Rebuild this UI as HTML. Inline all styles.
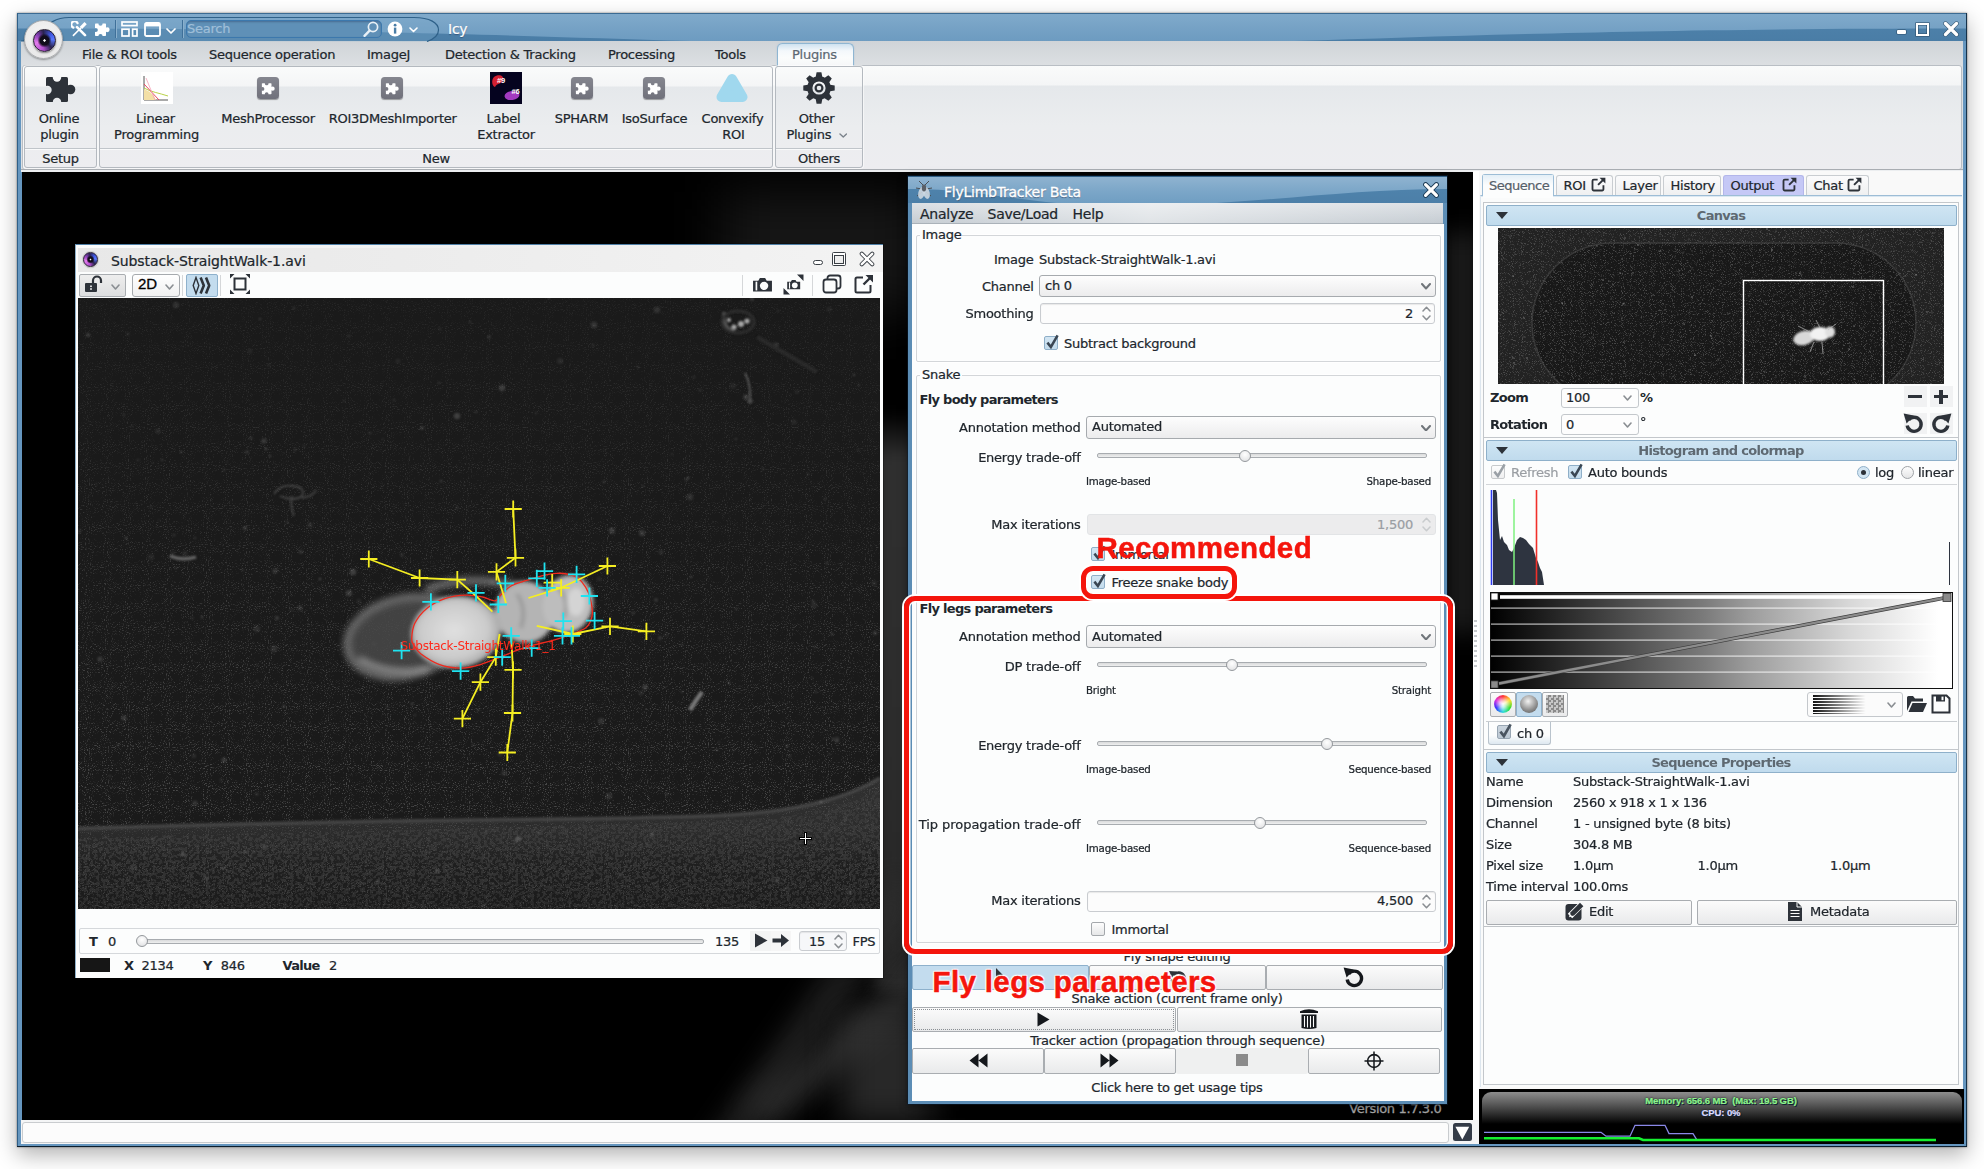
<!DOCTYPE html>
<html><head><meta charset="utf-8"><title>Icy</title>
<style>
*{box-sizing:border-box;margin:0;padding:0}
html,body{width:1984px;height:1169px;overflow:hidden;background:#fff}
body{font-family:"DejaVu Sans","Liberation Sans",sans-serif;font-size:13px;letter-spacing:-0.25px;color:#20262c;position:relative;-webkit-text-stroke:.22px}
body div,body svg,body span.a{position:absolute}
.t{white-space:nowrap;line-height:16px;height:16px}
.b{font-weight:bold;letter-spacing:-0.7px;-webkit-text-stroke:0}
.w{color:#fff}
.g{color:#9a9ea3}
.s{letter-spacing:-0.2px}
#win{left:17px;top:13px;width:1950px;height:1134px;background:#6596bf;box-shadow:0 8px 20px rgba(0,0,0,.30),0 0 2px rgba(0,0,0,.5)}
.band{border:1px solid #b4b9bf;border-radius:3px;background:linear-gradient(#fafbfb 0,#f4f5f6 19px,#e5e8eb 20px,#ebedef 60px,#ededf0 100%);box-shadow:0 0 0 1px rgba(255,255,255,.55)}
.bttl{left:0;right:0;bottom:0;height:19px;border-top:1px solid #c0c5ca;box-shadow:inset 0 1px 0 rgba(255,255,255,.7)}
.btn{border:1px solid #a9adb1;border-radius:2px;background:linear-gradient(#fbfbfb,#e9eaeb)}
.btn.sel{background:#c3dcee;border-color:#8eb1cc}
.combo{border:1px solid #a6aaae;border-radius:3px;background:linear-gradient(#fdfdfd,#ececed)}
.spin{border:1px solid #c9ccd0;border-radius:3px;background:#fcfcfc;box-shadow:inset 0 1px 1px rgba(0,0,0,.08)}
.cb{width:14px;height:14px;border:1px solid #8fafc8;border-radius:2px;background:linear-gradient(#d3e6f3,#c3dbec)}
.cb.off{border-color:#a4a8ac;background:linear-gradient(#fdfdfd,#e6e7e8)}
.track{height:5px;border:1px solid #a8acb0;border-radius:2px;background:linear-gradient(#d9dadb,#eeefef)}
.thumb{width:12px;height:12px;border-radius:6px;border:1px solid #94989c;background:radial-gradient(circle at 50% 35%,#fff,#dcdddf)}
.ph{height:21px;border:1px solid #8eb0ca;border-radius:2px;background:linear-gradient(#cfe5f3,#c0dbed)}
.grp{border:1px solid #d3d6d9;border-radius:2px;box-shadow:0 0 0 1px rgba(255,255,255,.8)}
.tab{top:174.5px;height:21px;border:1px solid #c9cdd1;border-bottom:none;border-radius:3px 3px 0 0;background:linear-gradient(#fbfbfc,#eeeff0)}
</style></head><body>

<div id="win"></div>
<div style="left:17px;top:13px;width:1950px;height:28px;background:linear-gradient(#3b6b93 0,#3b6b93 1px,#4f83ac 1px,#4a7da6 28px)"></div>
<svg style="left:17px;top:14px" width="1950" height="27" viewBox="0 0 1950 27" ><defs><linearGradient id="tbl" x1="0" y1="0" x2="0" y2="1"><stop offset="0" stop-color="#80aacb"/><stop offset=".6" stop-color="#729fc3"/><stop offset="1" stop-color="#6a99bf"/></linearGradient></defs><path d="M0 0 H1950 V14.5 C1450 14.5 1300 32 975 32 C650 32 500 14.5 0 14.5Z" fill="url(#tbl)"/></svg>
<div style="left:1966px;top:13px;width:1px;height:1133px;background:#16324a"></div>
<div style="left:17px;top:13px;width:1.4px;height:1134px;background:#2f5f88"></div><div style="left:17px;top:1146.3px;width:1950px;height:1px;background:#0d1f2e"></div>
<div style="left:21px;top:41px;width:1942px;height:24px;background:linear-gradient(#d0d4d8,#dcdfe2)"></div>
<div style="left:21px;top:65px;width:1942px;height:105px;background:#dde0e3"></div>
<div class="band" style="left:22px;top:65px;width:1940px;height:105px;border-color:#b9bec4;box-shadow:none"></div>
<div style="left:21px;top:169px;width:1942px;height:1px;background:#a9adb2"></div>
<div style="left:21px;top:170px;width:1942px;height:2px;background:#eceef0"></div>
<svg style="left:21px;top:14px" width="440" height="28" viewBox="0 0 440 28" ><path d="M0 27 C 20 27 22 3.5 48 3.5 L 393 3.5 C 409 3.5 417.5 9 417.5 16 C 417.5 21.5 413 25 406 27.5" fill="rgba(120,165,200,.35)" stroke="#2f6189" stroke-width="1.2"/></svg>
<div style="left:24px;top:20px;width:39px;height:39px;border-radius:50%;background:radial-gradient(circle at 50% 40%,#f6f6f6,#e4e4e4);border:1px solid #a9abad;box-shadow:0 1px 2px rgba(0,0,0,.35)"></div>
<div style="left:32.5px;top:28.5px;width:23px;height:23px;border-radius:50%;border:1.6px solid #231a2e;background:radial-gradient(circle,#fff 0 6%,rgba(255,255,255,0) 10%),radial-gradient(circle,#120d1c 0 30%,rgba(18,13,28,0) 48%),conic-gradient(from 190deg,#b44fd0,#e47cec 18%,#8a40b8 32%,#2a2350 45%,#3f56e0 60%,#5a78ff 70%,#2a2350 85%,#b44fd0);box-shadow:0 1px 2px rgba(0,0,0,.45)"></div>
<svg style="left:71px;top:21px" width="17" height="16" viewBox="0 0 17 16" ><g stroke="#fff" stroke-linecap="round" fill="none"><path d="M14 14.2 L6 6.2" stroke-width="2.6"/><path d="M6.6 2.2 A3.3 3.3 0 1 0 2.4 6.6" stroke-width="2.2"/><path d="M2.4 14.4 L9.6 7.2" stroke-width="1.6"/><path d="M10 6.8 L14.6 2.2" stroke-width="3.2" stroke-linecap="butt"/></g></svg>
<svg style="left:94px;top:21px" width="16" height="16" viewBox="0 0 32 32" ><defs><mask id="pz1"><rect width="32" height="32" fill="#fff"/><circle cx="13" cy="5.5" r="4.2" fill="#000"/><circle cx="3.5" cy="18" r="4.2" fill="#000"/><circle cx="13" cy="30" r="4.2" fill="#000"/></mask></defs>
<g mask="url(#pz1)" fill="#fff"><rect x="2" y="5" width="22" height="25" rx="1.5"/><circle cx="26.5" cy="17.5" r="4.8"/></g></svg>
<div style="left:115px;top:20px;width:1px;height:18px;background:#3f7099"></div><div style="left:116px;top:20px;width:1px;height:18px;background:#8ab0cd"></div>
<svg style="left:121px;top:21px" width="17" height="16" viewBox="0 0 17 16" ><g fill="none" stroke="#fff" stroke-width="1.7"><rect x="1" y="1" width="15" height="3.6"/><rect x="1" y="8.2" width="7" height="6.8"/><rect x="11.6" y="8.2" width="4.4" height="6.8"/></g></svg>
<svg style="left:144px;top:22px" width="17" height="15" viewBox="0 0 17 15" ><rect x="1" y="1" width="15" height="13" rx="1.5" fill="none" stroke="#fff" stroke-width="1.8"/><rect x="1" y="1" width="15" height="3.4" fill="#fff"/></svg>
<svg style="left:166px;top:28px" width="10" height="6" viewBox="0 0 10 6" ><path d="M1 1 L5.0 5 L9 1" fill="none" stroke="#fff" stroke-width="1.7" stroke-linecap="round" stroke-linejoin="round"/></svg>
<div style="left:182px;top:20px;width:1px;height:18px;background:#3f7099"></div><div style="left:183px;top:20px;width:1px;height:18px;background:#8ab0cd"></div>
<div style="left:186px;top:20px;width:196px;height:18px;border:1px solid #3c78ad;border-radius:5px;background:#5f90b7;box-shadow:inset 0 1px 2px rgba(0,0,40,.25)"></div>
<div class="t " style="top:21.40px;font-size:13px;line-height:16px;left:187px;color:#9fbfd9;font-size:13px">Search</div>
<svg style="left:362px;top:20px" width="18" height="18" viewBox="0 0 18 18" ><circle cx="11" cy="7" r="4.6" fill="none" stroke="#e8f0f6" stroke-width="1.7"/><path d="M7.6 10.6 L2.5 15.8" stroke="#e8f0f6" stroke-width="2.4" stroke-linecap="round"/></svg>
<svg style="left:387px;top:21px" width="16" height="16" viewBox="0 0 16 16" ><circle cx="8" cy="8" r="7.4" fill="#fff"/><rect x="6.9" y="6.6" width="2.4" height="6" fill="#4a7da6"/><circle cx="8.1" cy="4.2" r="1.4" fill="#4a7da6"/></svg>
<svg style="left:409px;top:27px" width="9" height="5.5" viewBox="0 0 9 5.5" ><path d="M1 1 L4.5 4.5 L8 1" fill="none" stroke="#fff" stroke-width="1.6" stroke-linecap="round" stroke-linejoin="round"/></svg>
<div class="t w" style="top:21.06px;font-size:14px;line-height:16px;left:448px;font-size:14px;text-shadow:0 1px 1px rgba(0,0,40,.35)">Icy</div>
<div style="left:1897px;top:30px;width:9px;height:4px;border-radius:1px;background:#fff;box-shadow:0 0 0 .6px #2d4f6c"></div>
<div style="left:1916px;top:22.5px;width:13px;height:13px;border:2px solid #fff;border-top-width:2.5px;box-shadow:0 0 0 .6px #2d4f6c,inset 0 0 0 .6px #2d4f6c"></div>
<svg style="left:1943px;top:21px" width="16" height="16" viewBox="0 0 16 16" ><path d="M2.5 2.5 L13.5 13.5 M13.5 2.5 L2.5 13.5" stroke="#274660" stroke-width="4.4" stroke-linecap="round"/><path d="M2.5 2.5 L13.5 13.5 M13.5 2.5 L2.5 13.5" stroke="#fff" stroke-width="3.4" stroke-linecap="round"/></svg>
<div class="t " style="top:46.90px;font-size:13px;line-height:16px;left:82px;">File &amp; ROI tools</div>
<div class="t " style="top:46.90px;font-size:13px;line-height:16px;left:209px;">Sequence operation</div>
<div class="t " style="top:46.90px;font-size:13px;line-height:16px;left:367px;">ImageJ</div>
<div class="t " style="top:46.90px;font-size:13px;line-height:16px;left:445px;">Detection &amp; Tracking</div>
<div class="t " style="top:46.90px;font-size:13px;line-height:16px;left:608px;">Processing</div>
<div class="t " style="top:46.90px;font-size:13px;line-height:16px;left:715px;">Tools</div>
<div style="left:777px;top:43px;width:76.5px;height:24px;border:1px solid #8fb6d2;border-bottom:none;border-radius:5.5px 5.5px 0 0;background:linear-gradient(#cfe2f0 0,#f4f8fb 30%,#fbfcfc 60%,#f4f6f7);box-shadow:0 0 1.5px rgba(120,170,210,.5)"></div>
<div class="t " style="top:46.90px;font-size:13px;line-height:16px;left:792px;color:#5d6872">Plugins</div>
<div class="band" style="left:24px;top:66px;width:73px;height:102px"><div class="bttl"></div></div><div class="t " style="top:150.90px;font-size:13px;line-height:16px;left:-239.5px;width:600px;text-align:center;">Setup</div>
<div class="band" style="left:99px;top:66px;width:674px;height:102px"><div class="bttl"></div></div><div class="t " style="top:150.90px;font-size:13px;line-height:16px;left:136.0px;width:600px;text-align:center;">New</div>
<div class="band" style="left:775px;top:66px;width:88px;height:102px"><div class="bttl"></div></div><div class="t " style="top:150.90px;font-size:13px;line-height:16px;left:519.0px;width:600px;text-align:center;">Others</div>
<svg style="left:44px;top:72px" width="32" height="32" viewBox="0 0 32 32" ><defs><mask id="pz2"><rect width="32" height="32" fill="#fff"/><circle cx="13" cy="5.5" r="4.2" fill="#000"/><circle cx="3.5" cy="18" r="4.2" fill="#000"/><circle cx="13" cy="30" r="4.2" fill="#000"/></mask></defs>
<g mask="url(#pz2)" fill="#2d3239"><rect x="2" y="5" width="22" height="25" rx="1.5"/><circle cx="26.5" cy="17.5" r="4.8"/></g></svg>
<div class="t " style="top:111.40px;font-size:13px;line-height:16px;left:-241px;width:600px;text-align:center;">Online</div>
<div class="t " style="top:127.40px;font-size:13px;line-height:16px;left:-240.5px;width:600px;text-align:center;">plugin</div>
<div style="left:141px;top:72px;width:32px;height:32px;background:#fff"></div>
<svg style="left:141px;top:72px" width="32" height="32" viewBox="0 0 32 32" ><path d="M3 4 V28 H27" fill="none" stroke="#555" stroke-width="1"/><path d="M3 17 L9 20 L13 24 L15 28 H3Z" fill="#f3dfa6"/><path d="M3 16 C10 20 18 21 27 24" stroke="#b9d24a" fill="none" stroke-width="1"/><path d="M3 12 L18 28" stroke="#e84a5f" stroke-width="1"/><path d="M5 6 L14 28" stroke="#f4a0b5" stroke-width=".8"/></svg>
<div class="t " style="top:111.40px;font-size:13px;line-height:16px;left:-144.5px;width:600px;text-align:center;">Linear</div>
<div class="t " style="top:127.40px;font-size:13px;line-height:16px;left:-143.5px;width:600px;text-align:center;">Programming</div>
<div style="left:257px;top:77px;width:22px;height:22px;border-radius:3.5px;background:linear-gradient(#85868f,#70717b);box-shadow:0 1px 1px rgba(0,0,0,.35)"></div><svg style="left:261px;top:81px" width="14" height="14" viewBox="0 0 32 32" ><defs><mask id="pz3"><rect width="32" height="32" fill="#fff"/><circle cx="13" cy="5.5" r="4.2" fill="#000"/><circle cx="3.5" cy="18" r="4.2" fill="#000"/><circle cx="13" cy="30" r="4.2" fill="#000"/></mask></defs>
<g mask="url(#pz3)" fill="#fff"><rect x="2" y="5" width="22" height="25" rx="1.5"/><circle cx="26.5" cy="17.5" r="4.8"/></g></svg>
<div class="t " style="top:111.40px;font-size:13px;line-height:16px;left:-32px;width:600px;text-align:center;">MeshProcessor</div>
<div style="left:381px;top:77px;width:22px;height:22px;border-radius:3.5px;background:linear-gradient(#85868f,#70717b);box-shadow:0 1px 1px rgba(0,0,0,.35)"></div><svg style="left:385px;top:81px" width="14" height="14" viewBox="0 0 32 32" ><defs><mask id="pz4"><rect width="32" height="32" fill="#fff"/><circle cx="13" cy="5.5" r="4.2" fill="#000"/><circle cx="3.5" cy="18" r="4.2" fill="#000"/><circle cx="13" cy="30" r="4.2" fill="#000"/></mask></defs>
<g mask="url(#pz4)" fill="#fff"><rect x="2" y="5" width="22" height="25" rx="1.5"/><circle cx="26.5" cy="17.5" r="4.8"/></g></svg>
<div class="t " style="top:111.40px;font-size:13px;line-height:16px;left:92.69999999999999px;width:600px;text-align:center;">ROI3DMeshImporter</div>
<div style="left:490px;top:72px;width:32px;height:32px;background:#05031f"></div>
<svg style="left:490px;top:72px" width="32" height="32" viewBox="0 0 32 32" ><path d="M4 5 C8 2 15 3 13 9 C11 12 7 11 5 15 C2 14 1 8 4 5Z" fill="#d42032"/><ellipse cx="22" cy="23.5" rx="7.5" ry="4.5" fill="#a23ac0" transform="rotate(-8 22 23.5)"/><text x="7" y="11" font-family="Liberation Sans,sans-serif" font-weight="bold" font-size="7.5" fill="#fff">#9</text><text x="21.5" y="21.5" font-family="Liberation Sans,sans-serif" font-weight="bold" font-size="7.5" fill="#fff">#6</text></svg>
<div class="t " style="top:111.40px;font-size:13px;line-height:16px;left:203.5px;width:600px;text-align:center;">Label</div>
<div class="t " style="top:127.40px;font-size:13px;line-height:16px;left:206px;width:600px;text-align:center;">Extractor</div>
<div style="left:571px;top:77px;width:22px;height:22px;border-radius:3.5px;background:linear-gradient(#85868f,#70717b);box-shadow:0 1px 1px rgba(0,0,0,.35)"></div><svg style="left:575px;top:81px" width="14" height="14" viewBox="0 0 32 32" ><defs><mask id="pz5"><rect width="32" height="32" fill="#fff"/><circle cx="13" cy="5.5" r="4.2" fill="#000"/><circle cx="3.5" cy="18" r="4.2" fill="#000"/><circle cx="13" cy="30" r="4.2" fill="#000"/></mask></defs>
<g mask="url(#pz5)" fill="#fff"><rect x="2" y="5" width="22" height="25" rx="1.5"/><circle cx="26.5" cy="17.5" r="4.8"/></g></svg>
<div class="t " style="top:111.40px;font-size:13px;line-height:16px;left:281.5px;width:600px;text-align:center;">SPHARM</div>
<div style="left:643px;top:77px;width:22px;height:22px;border-radius:3.5px;background:linear-gradient(#85868f,#70717b);box-shadow:0 1px 1px rgba(0,0,0,.35)"></div><svg style="left:647px;top:81px" width="14" height="14" viewBox="0 0 32 32" ><defs><mask id="pz6"><rect width="32" height="32" fill="#fff"/><circle cx="13" cy="5.5" r="4.2" fill="#000"/><circle cx="3.5" cy="18" r="4.2" fill="#000"/><circle cx="13" cy="30" r="4.2" fill="#000"/></mask></defs>
<g mask="url(#pz6)" fill="#fff"><rect x="2" y="5" width="22" height="25" rx="1.5"/><circle cx="26.5" cy="17.5" r="4.8"/></g></svg>
<div class="t " style="top:111.40px;font-size:13px;line-height:16px;left:354.5px;width:600px;text-align:center;">IsoSurface</div>
<svg style="left:716px;top:72px" width="32" height="32" viewBox="0 0 32 32" ><path d="M16 7 L26.5 25 H5.5Z" fill="#a0d8ee" stroke="#a0d8ee" stroke-width="10" stroke-linejoin="round"/></svg>
<div class="t " style="top:111.40px;font-size:13px;line-height:16px;left:432.5px;width:600px;text-align:center;">Convexify</div>
<div class="t " style="top:127.40px;font-size:13px;line-height:16px;left:433.5px;width:600px;text-align:center;">ROI</div>
<svg style="left:803px;top:72px" width="32" height="32" viewBox="0 0 32 32" ><g fill="#2d3239"><path d="M13.6 0.3 H18.4 L19.6 6.5 H12.4Z" transform="rotate(0 16 16)"/><path d="M13.6 0.3 H18.4 L19.6 6.5 H12.4Z" transform="rotate(45 16 16)"/><path d="M13.6 0.3 H18.4 L19.6 6.5 H12.4Z" transform="rotate(90 16 16)"/><path d="M13.6 0.3 H18.4 L19.6 6.5 H12.4Z" transform="rotate(135 16 16)"/><path d="M13.6 0.3 H18.4 L19.6 6.5 H12.4Z" transform="rotate(180 16 16)"/><path d="M13.6 0.3 H18.4 L19.6 6.5 H12.4Z" transform="rotate(225 16 16)"/><path d="M13.6 0.3 H18.4 L19.6 6.5 H12.4Z" transform="rotate(270 16 16)"/><path d="M13.6 0.3 H18.4 L19.6 6.5 H12.4Z" transform="rotate(315 16 16)"/></g><circle cx="16" cy="16" r="9.2" fill="none" stroke="#2d3239" stroke-width="5.2"/><circle cx="16" cy="16" r="3.4" fill="none" stroke="#2d3239" stroke-width="2.2"/></svg>
<div class="t " style="top:111.40px;font-size:13px;line-height:16px;left:516.5px;width:600px;text-align:center;">Other</div>
<div class="t " style="top:127.40px;font-size:13px;line-height:16px;left:508.79999999999995px;width:600px;text-align:center;">Plugins</div>
<svg style="left:838.5px;top:132.5px" width="8.5" height="5" viewBox="0 0 8.5 5" ><path d="M1 1 L4.25 4 L7.5 1" fill="none" stroke="#7b838b" stroke-width="1.4" stroke-linecap="round" stroke-linejoin="round"/></svg>
<div style="left:22px;top:172px;width:1451px;height:948px;background:#000;overflow:hidden"><div style="left:852px;top:240px;width:50px;height:580px;background:linear-gradient(rgba(40,40,40,0),rgba(50,50,50,.95) 8%,rgba(46,46,46,.95) 60%,rgba(40,40,40,.9));filter:blur(7px)"></div><div style="left:1420px;top:60px;width:40px;height:400px;background:rgba(44,44,44,.6);filter:blur(12px)"></div><div style="left:690px;top:800px;width:420px;height:30px;background:rgba(56,56,56,.8);filter:blur(14px);transform:rotate(-38deg)"></div><div style="left:600px;top:850px;width:360px;height:26px;background:rgba(46,46,46,.8);filter:blur(14px);transform:rotate(-55deg)"></div><div style="left:820px;top:840px;width:90px;height:110px;background:rgba(50,50,50,.8);filter:blur(16px)"></div><div style="left:700px;top:20px;width:200px;height:120px;background:rgba(24,24,24,.9);filter:blur(26px)"></div></div>
<div class="t " style="top:1100.90px;font-size:13px;line-height:16px;left:841.5px;width:600px;text-align:right;color:#a6a6a6;letter-spacing:-0.35px;-webkit-text-stroke:.3px #a6a6a6">Version 1.7.3.0</div>
<div style="left:21px;top:1120px;width:1942px;height:24px;background:#f4f5f6"></div>
<div style="left:22px;top:1122px;width:1427px;height:20.5px;border:1px solid #c9cccf;border-radius:3px;background:#fcfcfc"></div>
<div style="left:1453.3px;top:1123.4px;width:18.4px;height:18px;border-radius:2.5px;background:#343c48"></div>
<svg style="left:1453px;top:1123px" width="19" height="19" viewBox="0 0 19 19" ><path d="M2.4 3.8 H16.2 L9.3 16.5Z" fill="#fff"/></svg>
<div style="left:75px;top:244px;width:808px;height:734px;background:#fcfdfd;border-top:1px solid #4f7fa6;border-left:1px solid #8fb0c9;box-shadow:0 0 0 .5px rgba(0,0,0,.5)"></div>
<div style="left:76px;top:245px;width:807px;height:27px;background:linear-gradient(90deg,#e8e8e8,#ececec 40%,#f3f3f3)"></div><div style="left:76px;top:245px;width:500px;height:3px;background:linear-gradient(90deg,#fcfdfd,rgba(252,253,253,0))"></div><div style="left:76px;top:245px;width:2px;height:27px;background:#fcfdfd"></div>
<div style="left:83px;top:252px;width:15px;height:15px;border-radius:50%;border:1.2px solid #2a2036;background:radial-gradient(circle,#fff 0 7%,rgba(255,255,255,0) 12%),radial-gradient(circle,#120d1c 0 28%,rgba(18,13,28,0) 45%),conic-gradient(from 190deg,#b44fd0,#e47cec 18%,#8a40b8 32%,#2a2350 45%,#3f56e0 60%,#5a78ff 70%,#2a2350 85%,#b44fd0);box-shadow:0 0 0 1px #cfcfcf,0 1px 1px rgba(0,0,0,.3)"></div>
<div class="t " style="top:253.06px;font-size:14px;line-height:16px;left:111px;font-size:14px;letter-spacing:-0.1px">Substack-StraightWalk-1.avi</div>
<div style="left:813px;top:260px;width:10px;height:5px;border:1px solid #3a3f45;border-radius:2.5px;background:#fff"></div>
<div style="left:832px;top:252px;width:14px;height:14px;border:1px solid #3a3f45;border-radius:1.5px;background:#fff"></div><div style="left:834px;top:255px;width:10px;height:9px;border:1px solid #3a3f45;background:#eee"></div>
<svg style="left:859px;top:251px" width="16" height="16" viewBox="0 0 16 16" ><path d="M2.8 2.8 L13.2 13.2 M13.2 2.8 L2.8 13.2" stroke="#3a3f45" stroke-width="4.2" stroke-linecap="round"/><path d="M2.8 2.8 L13.2 13.2 M13.2 2.8 L2.8 13.2" stroke="#fff" stroke-width="2.4" stroke-linecap="round"/></svg>
<div class="btn" style="left:79px;top:273.5px;width:47px;height:23px;background:linear-gradient(#eeeeee,#dddedf)"></div>
<svg style="left:84px;top:275px" width="20" height="18" viewBox="0 0 20 18" ><rect x="1" y="8" width="12" height="9" rx="1" fill="#2d3239"/><path d="M9 8 V5.5 A4 4 0 0 1 17 5.5 V8" fill="none" stroke="#2d3239" stroke-width="2.2"/><rect x="6.2" y="10.5" width="1.6" height="1.6" fill="#fff"/><rect x="6.2" y="13.2" width="1.6" height="1.6" fill="#fff"/></svg>
<svg style="left:111px;top:284px" width="9" height="6" viewBox="0 0 9 6" ><path d="M1 1 L4.5 5 L8 1" fill="none" stroke="#8a8e92" stroke-width="1.6" stroke-linecap="round" stroke-linejoin="round"/></svg>
<div class="combo" style="left:132px;top:273.5px;width:48px;height:23px;background:linear-gradient(#fff,#f0f0f0)"></div>
<div class="t " style="top:275.81px;font-size:15px;line-height:16px;left:138px;font-family:'Liberation Sans',sans-serif;font-size:15px;color:#000;letter-spacing:0;-webkit-text-stroke:.3px #000">2D</div>
<svg style="left:165px;top:284px" width="9" height="6" viewBox="0 0 9 6" ><path d="M1 1 L4.5 5 L8 1" fill="none" stroke="#8a8e92" stroke-width="1.6" stroke-linecap="round" stroke-linejoin="round"/></svg>
<div style="left:182px;top:275px;width:1px;height:21px;background:#d5d7d9"></div>
<div class="btn sel" style="left:186px;top:273.5px;width:32px;height:23px"></div>
<svg style="left:192px;top:276px" width="20" height="19" viewBox="0 0 20 19" ><path d="M4 1.5 L1.2 9.5 L4 17.5 L6.8 9.5Z" fill="none" stroke="#2d3239" stroke-width="1.4"/><path d="M8.6 1.5 L11.8 9.5 L8.6 17.5" fill="none" stroke="#2d3239" stroke-width="2.6" stroke-linejoin="round"/><path d="M14 1.5 L17.2 9.5 L14 17.5" fill="none" stroke="#2d3239" stroke-width="2.6" stroke-linejoin="round"/></svg>
<div style="left:220px;top:275px;width:1px;height:21px;background:#d5d7d9"></div>
<svg style="left:230px;top:274px" width="20" height="20" viewBox="0 0 20 20" ><rect x="4.5" y="4.5" width="11" height="11" fill="none" stroke="#2d3239" stroke-width="2"/><path d="M0 0 H4.5 L0 4.5Z M20 0 V4.5 L15.5 0Z M20 20 H15.5 L20 15.5Z M0 20 V15.5 L4.5 20Z" fill="#2d3239"/></svg>
<div style="left:742px;top:275px;width:1px;height:21px;background:#d5d7d9"></div>
<svg style="left:751.5px;top:276px" width="21" height="16.5" viewBox="0 0 20 16" preserveAspectRatio="none"><path d="M1 4.5 H6 L7.5 2 H12.5 L14 4.5 H19 V15 H1Z" fill="#2d3239"/><circle cx="11.5" cy="9.5" r="4" fill="#fbfcfc"/><rect x="3.4" y="5.5" width="1.6" height="8.5" fill="#fbfcfc"/></svg>
<svg style="left:783px;top:274px" width="21" height="21" viewBox="0 0 21 21" ><g transform="translate(3.5,4.5) scale(.72)"><path d="M1 4.5 H6 L7.5 2 H12.5 L14 4.5 H19 V15 H1Z" fill="#2d3239"/><circle cx="11.5" cy="9.5" r="4" fill="#fbfcfc"/><rect x="3.4" y="5.5" width="1.6" height="8.5" fill="#fbfcfc"/></g><path d="M14 .5 H20.5 V7Z M0.5 14 V20.5 H7Z" fill="#2d3239"/></svg>
<div style="left:812px;top:275px;width:1px;height:21px;background:#d5d7d9"></div>
<svg style="left:822px;top:274px" width="20" height="20" viewBox="0 0 20 20" ><rect x="5.5" y="1.5" width="13" height="13" rx="2.5" fill="none" stroke="#2d3239" stroke-width="1.8"/><rect x="1.5" y="5.5" width="13" height="13" rx="2.5" fill="#fbfcfc" stroke="#2d3239" stroke-width="1.8"/></svg>
<svg style="left:854px;top:274px" width="20" height="20" viewBox="0 0 20 20" ><path d="M9 3.5 H3 A1.5 1.5 0 0 0 1.5 5 V17 A1.5 1.5 0 0 0 3 18.5 H15 A1.5 1.5 0 0 0 16.5 17 V11" fill="none" stroke="#2d3239" stroke-width="2"/><path d="M9.5 10.5 L17 3" stroke="#2d3239" stroke-width="2.4"/><path d="M11.5 1 H19 V8.5Z" fill="#2d3239"/></svg>
<svg style="left:78px;top:298px" width="802" height="611" viewBox="0 0 802 611" ><defs>
<filter id="nz" x="0" y="0" width="100%" height="100%"><feTurbulence type="fractalNoise" baseFrequency="0.95" numOctaves="1" seed="3"/><feColorMatrix type="matrix" values="0 0 0 0 0  0 0 0 0 0  0 0 0 0 0  4 4 0 0 -4.35"/><feComposite in="SourceGraphic" operator="in"/></filter>
<filter id="nz2" x="0" y="0" width="100%" height="100%"><feTurbulence type="fractalNoise" baseFrequency="0.32" numOctaves="2" seed="11"/><feColorMatrix type="matrix" values="0 0 0 0 0  0 0 0 0 0  0 0 0 0 0  9 9 0 0 -8.7"/><feComposite in="SourceGraphic" operator="in"/></filter>
<filter id="b2"><feGaussianBlur stdDeviation="2"/></filter><filter id="b3"><feGaussianBlur stdDeviation="3.2"/></filter><filter id="b1"><feGaussianBlur stdDeviation="1"/></filter><filter id="b8"><feGaussianBlur stdDeviation="14"/></filter>
<radialGradient id="abg" cx="48%" cy="48%" r="58%"><stop offset="0" stop-color="#e0e0e0"/><stop offset=".65" stop-color="#cbcbcb"/><stop offset="1" stop-color="#9a9a9a"/></radialGradient>
<linearGradient id="ng" x1="0" y1="0" x2="0" y2="1"><stop offset="0" stop-color="#303030" stop-opacity=".55"/><stop offset=".42" stop-color="#383838" stop-opacity=".95"/><stop offset=".8" stop-color="#484848" stop-opacity="1"/><stop offset="1" stop-color="#404040" stop-opacity="1"/></linearGradient>
<linearGradient id="lb" gradientUnits="userSpaceOnUse" x1="0" y1="500" x2="0" y2="611"><stop offset="0" stop-color="#2f2f2f"/><stop offset=".3" stop-color="#2c2c2c"/><stop offset=".6" stop-color="#1f1f1f"/><stop offset="1" stop-color="#1b1b1b"/></linearGradient><linearGradient id="lb2" gradientUnits="userSpaceOnUse" x1="0" y1="535" x2="0" y2="611"><stop offset="0" stop-color="#383838"/><stop offset="1" stop-color="#2b2b2b"/></linearGradient><clipPath id="imclip"><rect width="802" height="611"/></clipPath>
</defs>
<g clip-path="url(#imclip)">
<rect width="802" height="611" fill="#1a1a1a"/>
<path d="M0 530.5 C150 526 300 523 446 521.5 C540 520.5 600 519.5 653 517 C720 513 770 500 802 480 V611 H0Z" fill="url(#lb)"/>
<path d="M0 530.5 C150 526 300 523 446 521.5 C540 520.5 600 519.5 653 517 C720 513 770 500 802 480" fill="none" stroke="#444" stroke-width="3.5" filter="url(#b1)"/>
<path d="M0 540 C200 534 560 528 690 520 C750 514 780 504 802 490 V611 H0Z" fill="url(#lb2)" filter="url(#nz2)"/>
<rect width="802" height="611" fill="url(#ng)" filter="url(#nz)"/>
<g filter="url(#b1)"><circle cx="260" cy="92" r="1.2" fill="#fff" opacity="0.06"/><circle cx="430" cy="223" r="1.2" fill="#fff" opacity="0.15"/><circle cx="172" cy="53" r="2.6" fill="#fff" opacity="0.06"/><circle cx="73" cy="259" r="3.2" fill="#fff" opacity="0.06"/><circle cx="179" cy="383" r="1.2" fill="#fff" opacity="0.11"/><circle cx="318" cy="596" r="1.2" fill="#fff" opacity="0.11"/><circle cx="107" cy="256" r="3.2" fill="#fff" opacity="0.06"/><circle cx="247" cy="499" r="1.6" fill="#fff" opacity="0.06"/><circle cx="458" cy="115" r="1.2" fill="#fff" opacity="0.11"/><circle cx="50" cy="36" r="1.6" fill="#fff" opacity="0.10"/><circle cx="426" cy="475" r="2.6" fill="#fff" opacity="0.11"/><circle cx="363" cy="183" r="1.6" fill="#fff" opacity="0.13"/><circle cx="196" cy="351" r="3.2" fill="#fff" opacity="0.10"/><circle cx="275" cy="274" r="3.2" fill="#fff" opacity="0.16"/><circle cx="95" cy="255" r="2" fill="#fff" opacity="0.07"/><circle cx="392" cy="24" r="1.2" fill="#fff" opacity="0.13"/><circle cx="460" cy="535" r="2" fill="#fff" opacity="0.09"/><circle cx="281" cy="303" r="2.6" fill="#fff" opacity="0.06"/><circle cx="75" cy="165" r="1.2" fill="#fff" opacity="0.06"/><circle cx="563" cy="395" r="2.6" fill="#fff" opacity="0.08"/><circle cx="309" cy="409" r="1.2" fill="#fff" opacity="0.15"/><circle cx="285" cy="373" r="2.6" fill="#fff" opacity="0.06"/><circle cx="616" cy="79" r="1.6" fill="#fff" opacity="0.09"/><circle cx="735" cy="303" r="1.6" fill="#fff" opacity="0.10"/><circle cx="441" cy="540" r="2.6" fill="#fff" opacity="0.15"/><circle cx="223" cy="254" r="2" fill="#fff" opacity="0.13"/><circle cx="305" cy="141" r="1.2" fill="#fff" opacity="0.07"/><circle cx="186" cy="143" r="2.6" fill="#fff" opacity="0.14"/><circle cx="146" cy="172" r="1.6" fill="#fff" opacity="0.10"/><circle cx="296" cy="346" r="1.6" fill="#fff" opacity="0.13"/><circle cx="413" cy="377" r="1.2" fill="#fff" opacity="0.10"/><circle cx="699" cy="582" r="3.2" fill="#fff" opacity="0.09"/><circle cx="320" cy="63" r="2.6" fill="#fff" opacity="0.06"/><circle cx="54" cy="128" r="1.6" fill="#fff" opacity="0.06"/><circle cx="482" cy="63" r="3.2" fill="#fff" opacity="0.07"/><circle cx="81" cy="222" r="1.2" fill="#fff" opacity="0.06"/><circle cx="167" cy="230" r="2" fill="#fff" opacity="0.16"/><circle cx="483" cy="290" r="1.2" fill="#fff" opacity="0.14"/><circle cx="796" cy="285" r="2.6" fill="#fff" opacity="0.08"/><circle cx="116" cy="458" r="2" fill="#fff" opacity="0.10"/><circle cx="555" cy="315" r="1.6" fill="#fff" opacity="0.15"/><circle cx="424" cy="90" r="3.2" fill="#fff" opacity="0.15"/><circle cx="608" cy="182" r="1.2" fill="#fff" opacity="0.13"/><circle cx="209" cy="224" r="1.6" fill="#fff" opacity="0.09"/><circle cx="179" cy="331" r="3.2" fill="#fff" opacity="0.09"/><circle cx="179" cy="496" r="1.6" fill="#fff" opacity="0.14"/><circle cx="656" cy="452" r="1.6" fill="#fff" opacity="0.07"/><circle cx="395" cy="447" r="1.2" fill="#fff" opacity="0.14"/><circle cx="379" cy="118" r="3.2" fill="#fff" opacity="0.16"/><circle cx="359" cy="573" r="2" fill="#fff" opacity="0.16"/><circle cx="292" cy="135" r="1.6" fill="#fff" opacity="0.10"/><circle cx="271" cy="295" r="3.2" fill="#fff" opacity="0.14"/><circle cx="385" cy="399" r="1.2" fill="#fff" opacity="0.14"/><circle cx="96" cy="237" r="1.6" fill="#fff" opacity="0.10"/><circle cx="143" cy="482" r="2" fill="#fff" opacity="0.06"/><circle cx="759" cy="441" r="2.6" fill="#fff" opacity="0.09"/><circle cx="759" cy="443" r="1.6" fill="#fff" opacity="0.16"/><circle cx="22" cy="361" r="2.6" fill="#fff" opacity="0.14"/><circle cx="117" cy="505" r="2.6" fill="#fff" opacity="0.12"/><circle cx="281" cy="335" r="1.6" fill="#fff" opacity="0.05"/><circle cx="641" cy="444" r="1.2" fill="#fff" opacity="0.11"/><circle cx="749" cy="265" r="1.6" fill="#fff" opacity="0.14"/><circle cx="169" cy="154" r="2" fill="#fff" opacity="0.11"/><circle cx="612" cy="199" r="3.2" fill="#fff" opacity="0.10"/><circle cx="105" cy="556" r="2" fill="#fff" opacity="0.15"/><circle cx="531" cy="498" r="3.2" fill="#fff" opacity="0.10"/><circle cx="736" cy="307" r="3.2" fill="#fff" opacity="0.07"/><circle cx="409" cy="533" r="1.6" fill="#fff" opacity="0.12"/><circle cx="622" cy="92" r="1.6" fill="#fff" opacity="0.10"/><circle cx="582" cy="340" r="2" fill="#fff" opacity="0.13"/><circle cx="426" cy="295" r="1.2" fill="#fff" opacity="0.15"/><circle cx="46" cy="117" r="1.2" fill="#fff" opacity="0.13"/><circle cx="407" cy="343" r="1.2" fill="#fff" opacity="0.10"/><circle cx="491" cy="309" r="3.2" fill="#fff" opacity="0.07"/><circle cx="222" cy="310" r="2.6" fill="#fff" opacity="0.11"/><circle cx="199" cy="320" r="2" fill="#fff" opacity="0.15"/><circle cx="716" cy="124" r="2.6" fill="#fff" opacity="0.07"/><circle cx="98" cy="270" r="1.2" fill="#fff" opacity="0.12"/><circle cx="344" cy="130" r="2" fill="#fff" opacity="0.14"/><circle cx="719" cy="94" r="2" fill="#fff" opacity="0.07"/><circle cx="708" cy="591" r="1.6" fill="#fff" opacity="0.13"/><circle cx="75" cy="541" r="1.6" fill="#fff" opacity="0.16"/><circle cx="668" cy="99" r="2.6" fill="#fff" opacity="0.16"/><circle cx="324" cy="257" r="2" fill="#fff" opacity="0.09"/><circle cx="579" cy="12" r="3.2" fill="#fff" opacity="0.10"/><circle cx="564" cy="235" r="3.2" fill="#fff" opacity="0.12"/><circle cx="411" cy="39" r="1.6" fill="#fff" opacity="0.16"/><circle cx="84" cy="162" r="1.2" fill="#fff" opacity="0.15"/><circle cx="146" cy="462" r="2.6" fill="#fff" opacity="0.14"/><circle cx="542" cy="578" r="2.6" fill="#fff" opacity="0.07"/><circle cx="737" cy="349" r="2" fill="#fff" opacity="0.06"/><circle cx="46" cy="420" r="2.6" fill="#fff" opacity="0.15"/><circle cx="216" cy="10" r="1.2" fill="#fff" opacity="0.14"/><circle cx="67" cy="523" r="1.2" fill="#fff" opacity="0.08"/><circle cx="98" cy="7" r="3.2" fill="#fff" opacity="0.10"/><circle cx="734" cy="380" r="1.2" fill="#fff" opacity="0.11"/><circle cx="191" cy="67" r="1.6" fill="#fff" opacity="0.08"/><circle cx="145" cy="570" r="2" fill="#fff" opacity="0.11"/><circle cx="165" cy="272" r="1.6" fill="#fff" opacity="0.08"/><circle cx="645" cy="608" r="1.2" fill="#fff" opacity="0.05"/><circle cx="588" cy="337" r="1.6" fill="#fff" opacity="0.11"/><circle cx="197" cy="273" r="2.6" fill="#fff" opacity="0.12"/><circle cx="438" cy="543" r="3.2" fill="#fff" opacity="0.08"/><circle cx="173" cy="140" r="1.6" fill="#fff" opacity="0.14"/><circle cx="567" cy="389" r="2.6" fill="#fff" opacity="0.16"/><circle cx="787" cy="511" r="1.2" fill="#fff" opacity="0.06"/><circle cx="594" cy="156" r="1.6" fill="#fff" opacity="0.06"/><circle cx="534" cy="233" r="3.2" fill="#fff" opacity="0.12"/><circle cx="226" cy="148" r="2" fill="#fff" opacity="0.05"/><circle cx="149" cy="164" r="1.2" fill="#fff" opacity="0.08"/><circle cx="771" cy="594" r="3.2" fill="#fff" opacity="0.09"/><circle cx="28" cy="539" r="1.6" fill="#fff" opacity="0.09"/><circle cx="1" cy="233" r="2.6" fill="#fff" opacity="0.08"/><circle cx="526" cy="152" r="1.2" fill="#fff" opacity="0.06"/><circle cx="655" cy="88" r="3.2" fill="#fff" opacity="0.05"/><circle cx="18" cy="186" r="1.6" fill="#fff" opacity="0.06"/><circle cx="768" cy="521" r="1.6" fill="#fff" opacity="0.12"/><circle cx="574" cy="537" r="2.6" fill="#fff" opacity="0.13"/><circle cx="578" cy="302" r="2" fill="#fff" opacity="0.13"/><circle cx="516" cy="27" r="3.2" fill="#fff" opacity="0.12"/><circle cx="589" cy="496" r="1.6" fill="#fff" opacity="0.15"/><circle cx="604" cy="347" r="1.2" fill="#fff" opacity="0.14"/><circle cx="468" cy="546" r="1.6" fill="#fff" opacity="0.06"/><circle cx="34" cy="389" r="1.2" fill="#fff" opacity="0.09"/><circle cx="362" cy="31" r="1.2" fill="#fff" opacity="0.12"/><circle cx="546" cy="299" r="1.2" fill="#fff" opacity="0.10"/><circle cx="56" cy="570" r="3.2" fill="#fff" opacity="0.06"/><circle cx="422" cy="456" r="2.6" fill="#fff" opacity="0.08"/><circle cx="60" cy="162" r="1.6" fill="#fff" opacity="0.08"/><circle cx="521" cy="281" r="2.6" fill="#fff" opacity="0.06"/><circle cx="730" cy="176" r="1.2" fill="#fff" opacity="0.12"/><circle cx="515" cy="47" r="1.6" fill="#fff" opacity="0.09"/><circle cx="523" cy="423" r="3.2" fill="#fff" opacity="0.11"/><circle cx="10" cy="37" r="2" fill="#fff" opacity="0.16"/><circle cx="80" cy="133" r="2.6" fill="#fff" opacity="0.08"/><circle cx="414" cy="284" r="2.6" fill="#fff" opacity="0.13"/><circle cx="797" cy="335" r="2" fill="#fff" opacity="0.16"/><circle cx="751" cy="11" r="2.6" fill="#fff" opacity="0.06"/><circle cx="406" cy="608" r="2" fill="#fff" opacity="0.09"/><circle cx="735" cy="569" r="1.2" fill="#fff" opacity="0.11"/><circle cx="114" cy="320" r="2" fill="#fff" opacity="0.06"/><circle cx="658" cy="311" r="1.2" fill="#fff" opacity="0.13"/><circle cx="186" cy="548" r="2.6" fill="#fff" opacity="0.09"/><circle cx="128" cy="580" r="2.6" fill="#fff" opacity="0.09"/><circle cx="583" cy="254" r="2.6" fill="#fff" opacity="0.08"/><circle cx="674" cy="1" r="2" fill="#fff" opacity="0.14"/><circle cx="96" cy="566" r="1.2" fill="#fff" opacity="0.15"/><circle cx="232" cy="227" r="2.6" fill="#fff" opacity="0.09"/><circle cx="698" cy="47" r="2.6" fill="#fff" opacity="0.13"/><circle cx="685" cy="171" r="1.2" fill="#fff" opacity="0.14"/><circle cx="229" cy="572" r=".8" fill="#fff" opacity="0.34"/><circle cx="213" cy="312" r=".8" fill="#fff" opacity="0.32"/><circle cx="299" cy="584" r=".8" fill="#fff" opacity="0.56"/><circle cx="651" cy="385" r=".8" fill="#fff" opacity="0.57"/><circle cx="754" cy="336" r=".8" fill="#fff" opacity="0.50"/><circle cx="40" cy="447" r=".8" fill="#fff" opacity="0.41"/><circle cx="604" cy="394" r=".8" fill="#fff" opacity="0.35"/><circle cx="39" cy="566" r=".8" fill="#fff" opacity="0.29"/><circle cx="379" cy="210" r=".8" fill="#fff" opacity="0.35"/><circle cx="593" cy="597" r=".8" fill="#fff" opacity="0.34"/><circle cx="526" cy="184" r=".8" fill="#fff" opacity="0.45"/><circle cx="316" cy="102" r=".8" fill="#fff" opacity="0.31"/><circle cx="167" cy="554" r=".8" fill="#fff" opacity="0.42"/><circle cx="176" cy="554" r=".8" fill="#fff" opacity="0.60"/><circle cx="361" cy="85" r=".8" fill="#fff" opacity="0.32"/><circle cx="73" cy="209" r=".8" fill="#fff" opacity="0.28"/><circle cx="192" cy="158" r=".8" fill="#fff" opacity="0.45"/><circle cx="712" cy="458" r=".8" fill="#fff" opacity="0.39"/><circle cx="332" cy="320" r=".8" fill="#fff" opacity="0.38"/><circle cx="271" cy="38" r=".8" fill="#fff" opacity="0.35"/><circle cx="776" cy="77" r=".8" fill="#fff" opacity="0.43"/><circle cx="505" cy="527" r=".8" fill="#fff" opacity="0.33"/><circle cx="217" cy="152" r=".8" fill="#fff" opacity="0.39"/><circle cx="358" cy="583" r=".8" fill="#fff" opacity="0.55"/><circle cx="700" cy="13" r=".8" fill="#fff" opacity="0.26"/><circle cx="569" cy="547" r=".8" fill="#fff" opacity="0.42"/><circle cx="471" cy="0" r=".8" fill="#fff" opacity="0.39"/><circle cx="743" cy="504" r=".8" fill="#fff" opacity="0.55"/><circle cx="780" cy="152" r=".8" fill="#fff" opacity="0.29"/><circle cx="124" cy="319" r=".8" fill="#fff" opacity="0.49"/><circle cx="755" cy="441" r=".8" fill="#fff" opacity="0.48"/><circle cx="613" cy="279" r=".8" fill="#fff" opacity="0.44"/><circle cx="32" cy="478" r=".8" fill="#fff" opacity="0.33"/><circle cx="738" cy="394" r=".8" fill="#fff" opacity="0.36"/><circle cx="103" cy="154" r=".8" fill="#fff" opacity="0.47"/><circle cx="560" cy="69" r=".8" fill="#fff" opacity="0.27"/><circle cx="421" cy="356" r=".8" fill="#fff" opacity="0.39"/><circle cx="179" cy="367" r=".8" fill="#fff" opacity="0.25"/><circle cx="242" cy="281" r=".8" fill="#fff" opacity="0.59"/><circle cx="517" cy="540" r=".8" fill="#fff" opacity="0.42"/><circle cx="188" cy="151" r=".8" fill="#fff" opacity="0.59"/><circle cx="565" cy="188" r=".8" fill="#fff" opacity="0.26"/><circle cx="400" cy="412" r=".8" fill="#fff" opacity="0.40"/><circle cx="206" cy="408" r=".8" fill="#fff" opacity="0.57"/><circle cx="182" cy="21" r=".8" fill="#fff" opacity="0.37"/><circle cx="337" cy="417" r=".8" fill="#fff" opacity="0.32"/><circle cx="639" cy="452" r=".8" fill="#fff" opacity="0.43"/><circle cx="165" cy="593" r=".8" fill="#fff" opacity="0.36"/><circle cx="658" cy="141" r=".8" fill="#fff" opacity="0.33"/><circle cx="610" cy="180" r=".8" fill="#fff" opacity="0.58"/><circle cx="398" cy="114" r=".8" fill="#fff" opacity="0.33"/><circle cx="334" cy="406" r=".8" fill="#fff" opacity="0.58"/><circle cx="117" cy="240" r=".8" fill="#fff" opacity="0.32"/><circle cx="781" cy="87" r=".8" fill="#fff" opacity="0.27"/><circle cx="48" cy="240" r=".8" fill="#fff" opacity="0.56"/><circle cx="709" cy="448" r=".8" fill="#fff" opacity="0.60"/><circle cx="747" cy="201" r=".8" fill="#fff" opacity="0.31"/><circle cx="751" cy="456" r=".8" fill="#fff" opacity="0.26"/><circle cx="533" cy="231" r=".8" fill="#fff" opacity="0.38"/><circle cx="266" cy="103" r=".8" fill="#fff" opacity="0.25"/></g>
<g filter="url(#b1)" fill="none" stroke="#444" stroke-width="1.8"><path d="M196 196 q6 -10 20 -8 q12 2 8 10 q-8 6 -22 0 M214 198 q-2 10 2 20 M224 200 q12 -2 14 -8"/><path d="M92 258 q12 5 26 1" stroke-width="3.2" stroke="#666"/><path d="M679 39 L739 74" stroke="#2c2c2c" stroke-width="4"/><path d="M667 75 q6 12 5 26" stroke="#5c5c5c" stroke-width="1.7"/><circle cx="672" cy="103" r="2.6" fill="#4c4c4c" stroke="none"/><path d="M612 412 q6 -10 12 -18" stroke-width="4.5" stroke="#777"/><path d="M646 14 q-2 14 10 20" stroke="#555" stroke-width="3"/><g stroke="none" fill="#a8a8a8"><circle cx="663" cy="26" r="3"/><circle cx="669" cy="23" r="2.6"/><circle cx="656" cy="29" r="2.6"/><circle cx="651" cy="22" r="2"/></g><ellipse cx="660" cy="24" rx="16" ry="11" stroke="#2e2e2e" stroke-width="3"/></g>
<g filter="url(#b3)">
<ellipse cx="327.0" cy="339.0" rx="58" ry="38" fill="none" stroke="#7a7a7a" stroke-width="9" opacity=".8" transform="rotate(-13 327.0 339.0)"/>
<ellipse cx="327.0" cy="339.0" rx="56" ry="36" fill="#4a4a4a" opacity=".85" transform="rotate(-13 327.0 339.0)"/>
<path d="M281.0 361.0 q30 18 70 10" stroke="#a8a8a8" stroke-width="5" fill="none" opacity=".7"/>
<path d="M348.0 292.0 q40 -16 90 -4" stroke="#7a7a7a" stroke-width="8" fill="none" opacity=".8"/>
</g>
<g filter="url(#b2)">
<ellipse cx="447.0" cy="314.0" rx="30" ry="31" fill="#b4b4b4" transform="rotate(-20 447.0 314.0)"/>
<ellipse cx="490.0" cy="306.0" rx="25" ry="29" fill="#bdbdbd" transform="rotate(14 490.0 306.0)"/>
<ellipse cx="378.0" cy="334.0" rx="45" ry="36" fill="url(#abg)" transform="rotate(-6 378.0 334.0)"/>
<path d="M439.0 296.0 q10 14 4 34 M480.0 290.0 q12 10 6 30" stroke="#8a8a8a" stroke-width="3" fill="none" opacity=".8"/>
<ellipse cx="498.0" cy="304.0" rx="9" ry="14" fill="#dadada" opacity=".8"/>
</g>
<path d="M333.7 340.6C333.9 337.1 334.2 330.6 336.7 325.5C339.2 320.5 343.7 314.5 348.8 310.4C353.8 306.2 360.4 302.8 366.9 300.6C373.5 298.3 381.8 297.3 388.1 297.1C394.4 296.8 399.9 298.1 404.7 299.0C409.5 300.0 413.8 303.2 416.8 302.8C419.9 302.5 420.1 299.3 422.9 296.8C425.6 294.3 429.2 290.1 433.5 287.7C437.7 285.3 443.5 284.1 448.6 282.4C453.6 280.8 458.7 279.1 463.7 277.9C468.7 276.7 474.3 275.6 478.8 275.3C483.4 275.1 487.4 275.6 490.9 276.4C494.5 277.2 497.2 278.0 500.0 280.1C502.8 282.3 505.5 285.9 507.6 289.2C509.6 292.5 511.0 295.5 512.1 299.8C513.2 304.1 514.4 310.9 514.4 314.9C514.4 319.0 513.2 321.5 512.1 324.0C511.0 326.5 510.6 328.0 507.6 330.0C504.5 332.1 499.2 334.1 493.9 336.1C488.7 338.1 483.4 340.0 475.8 342.1C468.2 344.3 457.4 346.2 448.6 348.9C439.8 351.7 430.4 355.9 422.9 358.8C415.3 361.7 409.8 364.4 403.2 366.3C396.7 368.2 390.6 370.1 383.6 370.1C376.5 370.1 367.7 368.7 360.9 366.3C354.1 363.9 347.0 359.0 342.7 355.8C338.5 352.5 337.0 349.2 335.5 346.7C334.0 344.2 333.5 344.2 333.7 340.6Z" fill="none" stroke="#f02a1e" stroke-width="1.3"/>
<g stroke="#f5ee22" stroke-width="1.8" fill="none" stroke-linejoin="round"><polyline points="290.8,261.0 341.6,280.0 379.3,281.6 396.0,296.2 414.4,313.6"/><polyline points="435.2,211.0 437.5,259.8 418.5,273.9 428.0,305.2"/><polyline points="529.4,268.0 483.2,289.8 450.4,300.0"/><polyline points="568.4,333.4 532.0,328.3 494.8,336.0 458.8,327.8"/><polyline points="384.4,420.6 402.4,384.2 417.8,359.1 421.6,336.0"/><polyline points="429.3,454.5 434.5,415.0 435.0,371.9 433.2,338.5"/></g>
<path d="M282.2 261.0H299.4M290.8 252.4V269.6" stroke="#f5ee22" stroke-width="1.8" fill="none"/><path d="M333.0 280.0H350.2M341.6 271.4V288.6" stroke="#f5ee22" stroke-width="1.8" fill="none"/><path d="M370.7 281.6H387.9M379.3 273.0V290.2" stroke="#f5ee22" stroke-width="1.8" fill="none"/><path d="M426.6 211.0H443.8M435.2 202.4V219.6" stroke="#f5ee22" stroke-width="1.8" fill="none"/><path d="M428.9 259.8H446.1M437.5 251.2V268.4" stroke="#f5ee22" stroke-width="1.8" fill="none"/><path d="M409.9 273.9H427.1M418.5 265.3V282.5" stroke="#f5ee22" stroke-width="1.8" fill="none"/><path d="M520.8 268.0H538.0M529.4 259.4V276.6" stroke="#f5ee22" stroke-width="1.8" fill="none"/><path d="M474.6 289.8H491.8M483.2 281.2V298.4" stroke="#f5ee22" stroke-width="1.8" fill="none"/><path d="M465.6 284.6H482.8M474.2 276.0V293.2" stroke="#f5ee22" stroke-width="1.8" fill="none"/><path d="M559.8 333.4H577.0M568.4 324.8V342.0" stroke="#f5ee22" stroke-width="1.8" fill="none"/><path d="M523.4 328.3H540.6M532.0 319.7V336.9" stroke="#f5ee22" stroke-width="1.8" fill="none"/><path d="M486.2 336.0H503.4M494.8 327.4V344.6" stroke="#f5ee22" stroke-width="1.8" fill="none"/><path d="M375.8 420.6H393.0M384.4 412.0V429.2" stroke="#f5ee22" stroke-width="1.8" fill="none"/><path d="M393.8 384.2H411.0M402.4 375.6V392.8" stroke="#f5ee22" stroke-width="1.8" fill="none"/><path d="M409.2 359.1H426.4M417.8 350.5V367.7" stroke="#f5ee22" stroke-width="1.8" fill="none"/><path d="M420.7 454.5H437.9M429.3 445.9V463.1" stroke="#f5ee22" stroke-width="1.8" fill="none"/><path d="M425.9 415.0H443.1M434.5 406.4V423.6" stroke="#f5ee22" stroke-width="1.8" fill="none"/><path d="M426.4 371.9H443.6M435.0 363.3V380.5" stroke="#f5ee22" stroke-width="1.8" fill="none"/>
<path d="M344.3 303.9H361.5M352.9 295.3V312.5" stroke="#1fe3f0" stroke-width="1.8" fill="none"/><path d="M315.0 352.6H332.2M323.6 344.0V361.2" stroke="#1fe3f0" stroke-width="1.8" fill="none"/><path d="M374.0 373.2H391.2M382.6 364.6V381.8" stroke="#1fe3f0" stroke-width="1.8" fill="none"/><path d="M389.4 294.9H406.6M398.0 286.3V303.5" stroke="#1fe3f0" stroke-width="1.8" fill="none"/><path d="M411.7 306.5H428.9M420.3 297.9V315.1" stroke="#1fe3f0" stroke-width="1.8" fill="none"/><path d="M418.7 285.4H435.9M427.3 276.8V294.0" stroke="#1fe3f0" stroke-width="1.8" fill="none"/><path d="M450.2 280.3H467.4M458.8 271.7V288.9" stroke="#1fe3f0" stroke-width="1.8" fill="none"/><path d="M457.9 273.1H475.1M466.5 264.5V281.7" stroke="#1fe3f0" stroke-width="1.8" fill="none"/><path d="M460.5 289.8H477.7M469.1 281.2V298.4" stroke="#1fe3f0" stroke-width="1.8" fill="none"/><path d="M490.0 276.4H507.2M498.6 267.8V285.0" stroke="#1fe3f0" stroke-width="1.8" fill="none"/><path d="M502.8 298.0H520.0M511.4 289.4V306.6" stroke="#1fe3f0" stroke-width="1.8" fill="none"/><path d="M508.0 322.6H525.2M516.6 314.0V331.2" stroke="#1fe3f0" stroke-width="1.8" fill="none"/><path d="M476.7 323.1H493.9M485.3 314.5V331.7" stroke="#1fe3f0" stroke-width="1.8" fill="none"/><path d="M475.9 337.8H493.1M484.5 329.2V346.4" stroke="#1fe3f0" stroke-width="1.8" fill="none"/><path d="M484.9 337.8H502.1M493.5 329.2V346.4" stroke="#1fe3f0" stroke-width="1.8" fill="none"/><path d="M424.6 337.8H441.8M433.2 329.2V346.4" stroke="#1fe3f0" stroke-width="1.8" fill="none"/><path d="M445.1 350.1H462.3M453.7 341.5V358.7" stroke="#1fe3f0" stroke-width="1.8" fill="none"/><path d="M415.6 359.1H432.8M424.2 350.5V367.7" stroke="#1fe3f0" stroke-width="1.8" fill="none"/>
<text x="322.6" y="352.0" font-family="DejaVu Sans,sans-serif" font-size="12" fill="#ff2a1c" textLength="155" lengthAdjust="spacingAndGlyphs">Substack-StraightWalk-1_1</text>
<path d="M727.5 534 V547 M721 540.5 H734" stroke="#000" stroke-width="3"/><path d="M727.5 535 V546 M722 540.5 H733" stroke="#fff" stroke-width="1"/>
</g></svg>
<div style="left:79px;top:928px;width:801px;height:26px;border:1px solid #d5d8db;border-radius:2px;background:#fcfdfd"></div>
<div class="t b" style="top:933.60px;font-size:13px;line-height:16px;left:89px;">T</div>
<div class="t " style="top:933.60px;font-size:13px;line-height:16px;left:108px;">0</div>
<div class="track" style="left:142px;top:939px;width:562px"></div>
<div class="thumb" style="left:136px;top:935px"></div>
<div class="t " style="top:933.80px;font-size:13px;line-height:16px;left:715px;">135</div>
<div style="left:750px;top:931px;width:21px;height:20px;background:#f3f4f4"></div><div style="left:771px;top:931px;width:20px;height:20px;background:#f6f6f6"></div>
<svg style="left:754px;top:933px" width="14" height="15" viewBox="0 0 14 15" ><path d="M1 0.5 L13.5 7.5 L1 14.5Z" fill="#2d3239"/></svg>
<svg style="left:772px;top:933px" width="18" height="15" viewBox="0 0 18 15" ><path d="M0.5 5.5 H9 V1 L17 7.5 L9 14 V9.5 H0.5Z" fill="#2d3239"/></svg>
<div class="spin" style="left:799px;top:931px;width:48px;height:20px;background:#f6f7f9"></div>
<div class="t " style="top:933.80px;font-size:13px;line-height:16px;left:225px;width:600px;text-align:right;">15</div>
<svg style="left:834px;top:933.5px" width="9" height="6" viewBox="0 0 9 6" ><path d="M1 5 L4.5 1.2 L8 5" fill="none" stroke="#8a8e92" stroke-width="1.5" stroke-linecap="round" stroke-linejoin="round"/></svg><svg style="left:834px;top:942.5px" width="9" height="6" viewBox="0 0 9 6" ><path d="M1 1 L4.5 4.8 L8 1" fill="none" stroke="#8a8e92" stroke-width="1.5" stroke-linecap="round" stroke-linejoin="round"/></svg>
<div class="t " style="top:933.80px;font-size:13px;line-height:16px;left:852.5px;">FPS</div>
<div style="left:80px;top:958px;width:30px;height:14px;background:#161616"></div>
<div class="t b" style="top:957.80px;font-size:13px;line-height:16px;left:124px;">X</div>
<div class="t " style="top:957.80px;font-size:13px;line-height:16px;left:141.4px;">2134</div>
<div class="t b" style="top:957.80px;font-size:13px;line-height:16px;left:203px;">Y</div>
<div class="t " style="top:957.80px;font-size:13px;line-height:16px;left:220.8px;">846</div>
<div class="t b" style="top:957.80px;font-size:13px;line-height:16px;left:282.5px;">Value</div>
<div class="t " style="top:957.80px;font-size:13px;line-height:16px;left:329px;">2</div>
<div style="left:908px;top:176px;width:539px;height:928px;background:#5c8db5;box-shadow:0 0 0 1px rgba(10,30,50,.55),0 2px 8px rgba(0,0,0,.5)"></div>
<div style="left:908px;top:176px;width:539px;height:27px;background:linear-gradient(#2f5f86 0,#2f5f86 1px,#5085ae 1px,#4c7fa8 27px)"></div>
<svg style="left:908px;top:177px" width="539" height="26" viewBox="0 0 539 26" ><defs><linearGradient id="tbl2" x1="0" y1="0" x2="0" y2="1"><stop offset="0" stop-color="#8fb3d0"/><stop offset=".5" stop-color="#7ba6c8"/><stop offset="1" stop-color="#6d9cc1"/></linearGradient></defs><path d="M0 0 H539 V12 C430 12 340 29 215 29 C120 29 80 12 0 12Z" fill="url(#tbl2)"/></svg>
<svg style="left:915px;top:180px" width="18" height="20" viewBox="0 0 18 20" ><g stroke="#4a4f55" stroke-width="1" fill="none"><path d="M9 6 L4 1 M9 6 L14 1 M7 9 L1 8 M11 9 L17 8 M7 12 L2 16 M11 12 L16 16"/></g><ellipse cx="6.5" cy="13" rx="3.2" ry="6" fill="#d5dde4" opacity=".85" transform="rotate(12 6.5 13)"/><ellipse cx="11.5" cy="13" rx="3.2" ry="6" fill="#d5dde4" opacity=".85" transform="rotate(-12 11.5 13)"/><ellipse cx="9" cy="8" rx="2.2" ry="3.4" fill="#5a5f66"/></svg>
<div class="t w" style="top:184.46px;font-size:14px;line-height:16px;left:944px;font-size:14px;letter-spacing:-0.25px;-webkit-text-stroke:.35px #fff;text-shadow:0 1px 1px rgba(0,0,30,.45)">FlyLimbTracker Beta</div>
<svg style="left:1423px;top:182px" width="16" height="16" viewBox="0 0 16 16" ><path d="M2.6 2.6 L13.4 13.4 M13.4 2.6 L2.6 13.4" stroke="#1e3d57" stroke-width="5" stroke-linecap="round"/><path d="M2.6 2.6 L13.4 13.4 M13.4 2.6 L2.6 13.4" stroke="#fff" stroke-width="3.2" stroke-linecap="round"/></svg>
<div style="left:912px;top:203px;width:531px;height:21px;background:linear-gradient(90deg,rgba(255,255,255,0),rgba(255,255,255,.45) 45%,rgba(255,255,255,0)),linear-gradient(#dde1e5,#c6cdd3);border-bottom:1px solid #aab2b9"></div>
<div class="t " style="top:205.86px;font-size:14px;line-height:16px;left:920px;font-size:14px">Analyze</div>
<div class="t " style="top:205.86px;font-size:14px;line-height:16px;left:987.5px;font-size:14px">Save/Load</div>
<div class="t " style="top:205.86px;font-size:14px;line-height:16px;left:1072.5px;font-size:14px">Help</div>
<div style="left:912px;top:224px;width:532px;height:876.5px;background:#fcfdfd"></div>
<div class="grp" style="left:916px;top:235px;width:525px;height:127.3px"></div>
<div style="left:920px;top:230px;width:42px;height:12px;background:#fcfdfd"></div>
<div class="t " style="top:227.00px;font-size:13px;line-height:16px;left:922px;">Image</div>
<div class="t " style="top:252.20px;font-size:13px;line-height:16px;left:433.5px;width:600px;text-align:right;">Image</div>
<div class="t " style="top:252.20px;font-size:13px;line-height:16px;left:1039px;">Substack-StraightWalk-1.avi</div>
<div class="t " style="top:278.90px;font-size:13px;line-height:16px;left:433.5px;width:600px;text-align:right;">Channel</div>
<div class="combo" style="left:1039px;top:275.4px;width:397px;height:21.4px"></div><div class="t " style="top:278.00px;font-size:13px;line-height:16px;left:1045px;">ch 0</div><svg style="left:1420.5px;top:283.09999999999997px" width="10" height="6.5" viewBox="0 0 10 6.5" ><path d="M1 1 L5.0 5.5 L9 1" fill="none" stroke="#6f7479" stroke-width="2" stroke-linecap="round" stroke-linejoin="round"/></svg>
<div class="t " style="top:306.20px;font-size:13px;line-height:16px;left:433.5px;width:600px;text-align:right;">Smoothing</div>
<div class="spin" style="left:1040px;top:303px;width:395px;height:21px"></div>
<div class="t " style="top:306.20px;font-size:13px;line-height:16px;left:813px;width:600px;text-align:right;">2</div>
<svg style="left:1422px;top:306px" width="9" height="6" viewBox="0 0 9 6" ><path d="M1 5 L4.5 1.2 L8 5" fill="none" stroke="#8a8e92" stroke-width="1.5" stroke-linecap="round" stroke-linejoin="round"/></svg><svg style="left:1422px;top:315px" width="9" height="6" viewBox="0 0 9 6" ><path d="M1 1 L4.5 4.8 L8 1" fill="none" stroke="#8a8e92" stroke-width="1.5" stroke-linecap="round" stroke-linejoin="round"/></svg>
<div class="cb" style="left:1044px;top:336px"></div><svg style="left:1044px;top:333px" width="17" height="18" viewBox="0 0 17 18" ><path d="M3.4 9.6 L6.9 14 L13.6 2.4" fill="none" stroke="#3a4653" stroke-width="2.5"/></svg>
<div class="t " style="top:336.20px;font-size:13px;line-height:16px;left:1064px;">Subtract background</div>
<div class="grp" style="left:916px;top:375px;width:525px;height:568px"></div>
<div style="left:920px;top:370px;width:42px;height:12px;background:#fcfdfd"></div>
<div class="t " style="top:367.20px;font-size:13px;line-height:16px;left:922px;">Snake</div>
<div class="t b" style="top:391.80px;font-size:13px;line-height:16px;left:919.5px;">Fly body parameters</div>
<div class="t " style="top:419.80px;font-size:13px;line-height:16px;left:480.5px;width:600px;text-align:right;">Annotation method</div>
<div class="combo" style="left:1086px;top:416.3px;width:350px;height:22.4px"></div><div class="t " style="top:419.40px;font-size:13px;line-height:16px;left:1092px;">Automated</div><svg style="left:1420.5px;top:424.5px" width="10" height="6.5" viewBox="0 0 10 6.5" ><path d="M1 1 L5.0 5.5 L9 1" fill="none" stroke="#6f7479" stroke-width="2" stroke-linecap="round" stroke-linejoin="round"/></svg>
<div class="t " style="top:450.40px;font-size:13px;line-height:16px;left:480.5px;width:600px;text-align:right;">Energy trade-off</div>
<div class="track" style="left:1097px;top:453.0px;width:330px"></div><div class="thumb" style="left:1239px;top:449.5px"></div>
<div class="t s" style="top:473.35px;font-size:10.25px;line-height:16px;left:1086px;font-size:10.25px">Image-based</div>
<div class="t s" style="top:473.35px;font-size:10.25px;line-height:16px;left:831px;width:600px;text-align:right;font-size:10.25px">Shape-based</div>
<div class="t " style="top:517.20px;font-size:13px;line-height:16px;left:480.5px;width:600px;text-align:right;">Max iterations</div>
<div style="left:1087px;top:514px;width:349px;height:21px;border:1px solid #e2e4e6;border-radius:3px;background:#ececed"></div>
<div class="t g" style="top:517.20px;font-size:13px;line-height:16px;left:813px;width:600px;text-align:right;">1,500</div>
<svg style="left:1422px;top:517px" width="9" height="6" viewBox="0 0 9 6" ><path d="M1 5 L4.5 1.2 L8 5" fill="none" stroke="#c9ccce" stroke-width="1.5" stroke-linecap="round" stroke-linejoin="round"/></svg><svg style="left:1422px;top:526px" width="9" height="6" viewBox="0 0 9 6" ><path d="M1 1 L4.5 4.8 L8 1" fill="none" stroke="#c9ccce" stroke-width="1.5" stroke-linecap="round" stroke-linejoin="round"/></svg>
<div class="cb" style="left:1091px;top:547px"></div><svg style="left:1091px;top:544px" width="17" height="18" viewBox="0 0 17 18" ><path d="M3.4 9.6 L6.9 14 L13.6 2.4" fill="none" stroke="#3a4653" stroke-width="2.5"/></svg>
<div class="t " style="top:547.20px;font-size:13px;line-height:16px;left:1111.5px;">Immortal</div>
<div class="cb" style="left:1091px;top:575px"></div><svg style="left:1091px;top:572px" width="17" height="18" viewBox="0 0 17 18" ><path d="M3.4 9.6 L6.9 14 L13.6 2.4" fill="none" stroke="#3a4653" stroke-width="2.5"/></svg>
<div class="t " style="top:574.80px;font-size:13px;line-height:16px;left:1111.5px;">Freeze snake body</div>
<div class="t b" style="top:600.50px;font-size:13px;line-height:16px;left:919.5px;">Fly legs parameters</div>
<div class="t " style="top:629.20px;font-size:13px;line-height:16px;left:480.5px;width:600px;text-align:right;">Annotation method</div>
<div class="combo" style="left:1086px;top:625.4px;width:350px;height:22.4px"></div><div class="t " style="top:628.60px;font-size:13px;line-height:16px;left:1092px;">Automated</div><svg style="left:1420.5px;top:633.6px" width="10" height="6.5" viewBox="0 0 10 6.5" ><path d="M1 1 L5.0 5.5 L9 1" fill="none" stroke="#6f7479" stroke-width="2" stroke-linecap="round" stroke-linejoin="round"/></svg>
<div class="t " style="top:658.50px;font-size:13px;line-height:16px;left:480.5px;width:600px;text-align:right;">DP trade-off</div>
<div class="track" style="left:1097px;top:662.0px;width:330px"></div><div class="thumb" style="left:1225.5px;top:658.5px"></div>
<div class="t s" style="top:682.05px;font-size:10.25px;line-height:16px;left:1086px;font-size:10.25px">Bright</div>
<div class="t s" style="top:682.05px;font-size:10.25px;line-height:16px;left:831px;width:600px;text-align:right;font-size:10.25px">Straight</div>
<div class="t " style="top:737.90px;font-size:13px;line-height:16px;left:480.5px;width:600px;text-align:right;">Energy trade-off</div>
<div class="track" style="left:1097px;top:741.0px;width:330px"></div><div class="thumb" style="left:1320.5px;top:737.5px"></div>
<div class="t s" style="top:761.05px;font-size:10.25px;line-height:16px;left:1086px;font-size:10.25px">Image-based</div>
<div class="t s" style="top:761.05px;font-size:10.25px;line-height:16px;left:831px;width:600px;text-align:right;font-size:10.25px">Sequence-based</div>
<div class="t " style="top:816.50px;font-size:13px;line-height:16px;left:480.5px;width:600px;text-align:right;letter-spacing:-0.05px">Tip propagation trade-off</div>
<div class="track" style="left:1097px;top:820.0px;width:330px"></div><div class="thumb" style="left:1254px;top:816.5px"></div>
<div class="t s" style="top:840.05px;font-size:10.25px;line-height:16px;left:1086px;font-size:10.25px">Image-based</div>
<div class="t s" style="top:840.05px;font-size:10.25px;line-height:16px;left:831px;width:600px;text-align:right;font-size:10.25px">Sequence-based</div>
<div class="t " style="top:893.20px;font-size:13px;line-height:16px;left:480.5px;width:600px;text-align:right;">Max iterations</div>
<div class="spin" style="left:1087px;top:891px;width:349px;height:21px"></div>
<div class="t " style="top:893.20px;font-size:13px;line-height:16px;left:813px;width:600px;text-align:right;">4,500</div>
<svg style="left:1422px;top:894px" width="9" height="6" viewBox="0 0 9 6" ><path d="M1 5 L4.5 1.2 L8 5" fill="none" stroke="#8a8e92" stroke-width="1.5" stroke-linecap="round" stroke-linejoin="round"/></svg><svg style="left:1422px;top:903px" width="9" height="6" viewBox="0 0 9 6" ><path d="M1 1 L4.5 4.8 L8 1" fill="none" stroke="#8a8e92" stroke-width="1.5" stroke-linecap="round" stroke-linejoin="round"/></svg>
<div class="cb off" style="left:1091px;top:922px"></div>
<div class="t " style="top:921.60px;font-size:13px;line-height:16px;left:1111.5px;">Immortal</div>
<div class="t " style="top:949.40px;font-size:13px;line-height:16px;left:877px;width:600px;text-align:center;">Fly shape editing</div>
<div class="btn sel" style="left:912px;top:965px;width:177px;height:25px"></div>
<div class="btn" style="left:1089px;top:965px;width:177px;height:25px"></div>
<div class="btn" style="left:1266px;top:965px;width:177px;height:25px"></div>
<svg style="left:994px;top:967px" width="14" height="20" viewBox="0 0 14 20" ><path d="M2 1 L2 16 L5.5 12.5 L8 18.5 L10 17.6 L7.6 11.8 L12.4 11.6Z" fill="#2d3239"/></svg>
<svg style="left:1168px;top:967px" width="20" height="20" viewBox="0 0 20 20" ><path d="M5.5 8 A6.5 6.5 0 1 1 4 12" fill="none" stroke="#2d3239" stroke-width="2.6"/><path d="M1 4 L9 4.5 L4 10.5Z" fill="#2d3239"/></svg>
<svg style="left:1343px;top:966px" width="22" height="22" viewBox="0 0 22 22" ><path d="M5.6 8 A7.2 7.2 0 1 1 4.2 13.4" fill="none" stroke="#15181c" stroke-width="3.4"/><path d="M0.6 1.6 L10.8 3.4 L3.6 11.4Z" fill="#15181c"/></svg>
<div class="t " style="top:991.10px;font-size:13px;line-height:16px;left:877px;width:600px;text-align:center;">Snake action (current frame only)</div>
<div class="btn" style="left:912px;top:1007px;width:264px;height:25px"></div><div style="left:914px;top:1009px;width:260px;height:21px;border:1px dotted #8a8f94"></div>
<div class="btn" style="left:1177px;top:1007px;width:265px;height:25px"></div>
<svg style="left:1037px;top:1012px" width="13" height="15" viewBox="0 0 13 15" ><path d="M.5 .5 L12.5 7.5 L.5 14.5Z" fill="#15181c"/></svg>
<svg style="left:1299px;top:1008px" width="20" height="22" viewBox="0 0 20 22" ><path d="M1 3.2 Q10 -0.8 19 3.2 V5 H1Z" fill="#15181c"/><path d="M2.5 6.5 H17.5 V20 Q10 22 2.5 20Z" fill="#15181c"/><path d="M5.5 8 V19 M8.5 8 V19.5 M11.5 8 V19.5 M14.5 8 V19" stroke="#fcfdfd" stroke-width="1.1"/></svg>
<div class="t " style="top:1032.70px;font-size:13px;line-height:16px;left:877.5px;width:600px;text-align:center;">Tracker action (propagation through sequence)</div>
<div class="btn" style="left:912px;top:1048px;width:132px;height:26px"></div>
<div class="btn" style="left:1044px;top:1048px;width:132px;height:26px"></div>
<div style="left:1176px;top:1048px;width:132px;height:26px;background:#eff0f0;border-radius:2px"></div>
<div class="btn" style="left:1308px;top:1048px;width:132px;height:26px"></div>
<svg style="left:969px;top:1053px" width="19" height="15" viewBox="0 0 19 15" ><path d="M9.5 .5 V14.5 L.5 7.5Z M18.5 .5 V14.5 L9.5 7.5Z" fill="#15181c"/></svg>
<svg style="left:1100px;top:1053px" width="19" height="15" viewBox="0 0 19 15" ><path d="M.5 .5 V14.5 L9.5 7.5Z M9.5 .5 V14.5 L18.5 7.5Z" fill="#15181c"/></svg>
<div style="left:1236px;top:1054px;width:12px;height:12px;background:#8b8b8b"></div>
<svg style="left:1364px;top:1051px" width="20" height="20" viewBox="0 0 20 20" ><circle cx="10" cy="10" r="6.4" fill="none" stroke="#15181c" stroke-width="1.6"/><path d="M10 .5 V19.5 M.5 10 H19.5" stroke="#15181c" stroke-width="1.5"/></svg>
<div class="t " style="top:1080.20px;font-size:13px;line-height:16px;left:877px;width:600px;text-align:center;">Click here to get usage tips</div>
<div style="left:1473px;top:171px;width:490px;height:949px;background:#fff"></div><div style="left:1479px;top:171px;width:484px;height:949px;background:#f9f9f9"></div>
<div style="left:1474px;top:620px;width:3px;height:50px;background:repeating-linear-gradient(#c6c9cc 0,#c6c9cc 2px,transparent 2px,transparent 5px)"></div>
<div class="tab" style="left:1482px;width:72px;background:linear-gradient(#e4eff7,#fcfdfd 45%);border-color:#9dbdd6;height:23px;top:173.5px"></div>
<div class="t " style="top:178.00px;font-size:13px;line-height:16px;left:1489.5px;color:#55606a">Sequence</div>
<div class="tab" style="left:1556px;width:57px;"></div>
<div class="t " style="top:178.00px;font-size:13px;line-height:16px;left:1563.5px;">ROI</div>
<svg style="left:1591px;top:176.5px" width="15" height="15" viewBox="0 0 14 14" ><path d="M6.2 2.4 H2.6 A1.2 1.2 0 0 0 1.4 3.6 V11.4 A1.2 1.2 0 0 0 2.6 12.6 H10.4 A1.2 1.2 0 0 0 11.6 11.4 V7.8" fill="none" stroke="#2d3239" stroke-width="1.7"/><path d="M6.6 7.4 L11.8 2.2" stroke="#2d3239" stroke-width="1.8"/><path d="M8 .6 H13.4 V6Z" fill="#2d3239"/></svg>
<div class="tab" style="left:1615px;width:46px;"></div>
<div class="t " style="top:178.00px;font-size:13px;line-height:16px;left:1622.5px;">Layer</div>
<div class="tab" style="left:1663px;width:58px;"></div>
<div class="t " style="top:178.00px;font-size:13px;line-height:16px;left:1670.5px;">History</div>
<div class="tab" style="left:1723px;width:81px;background:#c5c8f6;border-color:#b3b6ea"></div>
<div class="t " style="top:178.00px;font-size:13px;line-height:16px;left:1730.5px;">Output</div>
<svg style="left:1782px;top:176.5px" width="15" height="15" viewBox="0 0 14 14" ><path d="M6.2 2.4 H2.6 A1.2 1.2 0 0 0 1.4 3.6 V11.4 A1.2 1.2 0 0 0 2.6 12.6 H10.4 A1.2 1.2 0 0 0 11.6 11.4 V7.8" fill="none" stroke="#2d3239" stroke-width="1.7"/><path d="M6.6 7.4 L11.8 2.2" stroke="#2d3239" stroke-width="1.8"/><path d="M8 .6 H13.4 V6Z" fill="#2d3239"/></svg>
<div class="tab" style="left:1806px;width:63px;"></div>
<div class="t " style="top:178.00px;font-size:13px;line-height:16px;left:1813.5px;">Chat</div>
<svg style="left:1847px;top:176.5px" width="15" height="15" viewBox="0 0 14 14" ><path d="M6.2 2.4 H2.6 A1.2 1.2 0 0 0 1.4 3.6 V11.4 A1.2 1.2 0 0 0 2.6 12.6 H10.4 A1.2 1.2 0 0 0 11.6 11.4 V7.8" fill="none" stroke="#2d3239" stroke-width="1.7"/><path d="M6.6 7.4 L11.8 2.2" stroke="#2d3239" stroke-width="1.8"/><path d="M8 .6 H13.4 V6Z" fill="#2d3239"/></svg>
<div style="left:1480px;top:195px;width:482px;height:892px;border-top:1px solid #9dbdd6;border-left:1px solid #dde6ee;background:#fafbfb;box-shadow:inset 0 1px 0 #dbe8f2"></div>
<div style="left:1483px;top:174.5px;width:70px;height:23px;background:linear-gradient(#e4eff7,#fcfdfd 45%)"></div>
<div class="t " style="top:178.00px;font-size:13px;line-height:16px;left:1489px;color:#55606a;letter-spacing:-0.5px">Sequence</div>
<div style="left:1483px;top:202px;width:476px;height:883px;border:1px solid #c3c7cb;background:#fcfdfd"></div>
<div class="ph" style="left:1486px;top:205px;width:471px"></div><svg style="left:1496px;top:212px" width="12" height="7" viewBox="0 0 12 7" ><path d="M0 0 H12 L6 7Z" fill="#2d3239"/></svg><div class="t b" style="top:208.40px;font-size:13px;line-height:16px;left:1421px;width:600px;text-align:center;color:#5e6972">Canvas</div>
<svg style="left:1498px;top:228px" width="446" height="156" viewBox="0 0 446 156" ><defs><filter id="tn" x="0" y="0" width="100%" height="100%"><feTurbulence type="fractalNoise" baseFrequency="1.1" numOctaves="2" seed="8"/><feColorMatrix type="matrix" values="0 0 0 0 0 0 0 0 0 0 0 0 0 0 0 4 4 0 0 -4.3"/><feComposite in="SourceGraphic" operator="in"/></filter><filter id="tb"><feGaussianBlur stdDeviation=".8"/></filter></defs>
<rect width="446" height="156" fill="#222"/>
<rect x="34" y="15" width="384" height="160" rx="80" fill="#181818" stroke="#383838" stroke-width="1.5"/>
<rect width="446" height="156" fill="#555" filter="url(#tn)" opacity=".8"/>
<circle cx="278" cy="116" r="0.8" fill="#fff" opacity="0.48"/><circle cx="330" cy="144" r="0.5" fill="#fff" opacity="0.44"/><circle cx="346" cy="39" r="0.5" fill="#fff" opacity="0.47"/><circle cx="50" cy="73" r="0.5" fill="#fff" opacity="0.28"/><circle cx="45" cy="39" r="0.8" fill="#fff" opacity="0.23"/><circle cx="125" cy="143" r="0.6" fill="#fff" opacity="0.21"/><circle cx="356" cy="22" r="0.8" fill="#fff" opacity="0.31"/><circle cx="59" cy="152" r="0.5" fill="#fff" opacity="0.22"/><circle cx="96" cy="153" r="0.5" fill="#fff" opacity="0.25"/><circle cx="429" cy="84" r="0.8" fill="#fff" opacity="0.37"/><circle cx="81" cy="151" r="0.5" fill="#fff" opacity="0.49"/><circle cx="399" cy="47" r="0.6" fill="#fff" opacity="0.30"/><circle cx="417" cy="41" r="0.6" fill="#fff" opacity="0.26"/><circle cx="269" cy="1" r="0.8" fill="#fff" opacity="0.40"/><circle cx="29" cy="55" r="0.6" fill="#fff" opacity="0.32"/><circle cx="141" cy="75" r="0.8" fill="#fff" opacity="0.21"/><circle cx="114" cy="146" r="0.8" fill="#fff" opacity="0.28"/><circle cx="180" cy="86" r="0.6" fill="#fff" opacity="0.28"/><circle cx="258" cy="1" r="0.5" fill="#fff" opacity="0.40"/><circle cx="278" cy="149" r="0.5" fill="#fff" opacity="0.41"/><circle cx="415" cy="147" r="0.6" fill="#fff" opacity="0.33"/><circle cx="398" cy="39" r="0.6" fill="#fff" opacity="0.19"/><circle cx="334" cy="124" r="0.6" fill="#fff" opacity="0.16"/><circle cx="422" cy="14" r="0.6" fill="#fff" opacity="0.33"/><circle cx="162" cy="23" r="0.6" fill="#fff" opacity="0.47"/><circle cx="243" cy="49" r="0.6" fill="#fff" opacity="0.26"/><circle cx="356" cy="98" r="0.8" fill="#fff" opacity="0.39"/><circle cx="445" cy="25" r="0.5" fill="#fff" opacity="0.18"/><circle cx="268" cy="144" r="0.5" fill="#fff" opacity="0.23"/><circle cx="265" cy="129" r="0.6" fill="#fff" opacity="0.38"/><circle cx="65" cy="153" r="0.8" fill="#fff" opacity="0.16"/><circle cx="220" cy="131" r="0.5" fill="#fff" opacity="0.49"/><circle cx="252" cy="21" r="0.6" fill="#fff" opacity="0.19"/><circle cx="194" cy="23" r="0.6" fill="#fff" opacity="0.25"/><circle cx="202" cy="156" r="0.5" fill="#fff" opacity="0.49"/><circle cx="202" cy="76" r="0.8" fill="#fff" opacity="0.26"/><circle cx="122" cy="73" r="0.5" fill="#fff" opacity="0.19"/><circle cx="367" cy="83" r="0.5" fill="#fff" opacity="0.37"/><circle cx="223" cy="53" r="0.5" fill="#fff" opacity="0.32"/><circle cx="230" cy="86" r="0.8" fill="#fff" opacity="0.28"/><circle cx="351" cy="121" r="0.8" fill="#fff" opacity="0.36"/><circle cx="15" cy="48" r="0.8" fill="#fff" opacity="0.40"/><circle cx="125" cy="76" r="0.8" fill="#fff" opacity="0.40"/><circle cx="427" cy="53" r="0.5" fill="#fff" opacity="0.35"/><circle cx="5" cy="85" r="0.6" fill="#fff" opacity="0.26"/><circle cx="122" cy="45" r="0.8" fill="#fff" opacity="0.38"/><circle cx="356" cy="54" r="0.8" fill="#fff" opacity="0.27"/><circle cx="418" cy="64" r="0.5" fill="#fff" opacity="0.45"/><circle cx="307" cy="152" r="0.6" fill="#fff" opacity="0.33"/><circle cx="236" cy="26" r="0.6" fill="#fff" opacity="0.48"/><circle cx="213" cy="108" r="0.8" fill="#fff" opacity="0.38"/><circle cx="186" cy="96" r="0.8" fill="#fff" opacity="0.33"/><circle cx="418" cy="47" r="0.8" fill="#fff" opacity="0.42"/><circle cx="284" cy="112" r="0.5" fill="#fff" opacity="0.22"/><circle cx="262" cy="97" r="0.5" fill="#fff" opacity="0.23"/><circle cx="306" cy="98" r="0.5" fill="#fff" opacity="0.50"/><circle cx="437" cy="26" r="0.5" fill="#fff" opacity="0.19"/><circle cx="432" cy="75" r="0.8" fill="#fff" opacity="0.16"/><circle cx="208" cy="59" r="0.8" fill="#fff" opacity="0.18"/><circle cx="91" cy="112" r="0.6" fill="#fff" opacity="0.15"/><circle cx="181" cy="43" r="0.6" fill="#fff" opacity="0.45"/><circle cx="307" cy="85" r="0.5" fill="#fff" opacity="0.34"/><circle cx="134" cy="46" r="0.8" fill="#fff" opacity="0.27"/><circle cx="259" cy="149" r="0.5" fill="#fff" opacity="0.30"/><circle cx="363" cy="100" r="0.6" fill="#fff" opacity="0.31"/><circle cx="70" cy="60" r="0.6" fill="#fff" opacity="0.49"/><circle cx="432" cy="95" r="0.6" fill="#fff" opacity="0.44"/><circle cx="295" cy="60" r="0.6" fill="#fff" opacity="0.35"/><circle cx="274" cy="22" r="0.8" fill="#fff" opacity="0.46"/><circle cx="252" cy="67" r="0.5" fill="#fff" opacity="0.32"/><circle cx="214" cy="110" r="0.6" fill="#fff" opacity="0.49"/><circle cx="408" cy="93" r="0.6" fill="#fff" opacity="0.41"/><circle cx="134" cy="39" r="0.5" fill="#fff" opacity="0.26"/><circle cx="439" cy="77" r="0.6" fill="#fff" opacity="0.20"/><circle cx="11" cy="103" r="0.6" fill="#fff" opacity="0.24"/><circle cx="18" cy="21" r="0.6" fill="#fff" opacity="0.15"/><circle cx="238" cy="43" r="0.6" fill="#fff" opacity="0.42"/><circle cx="110" cy="42" r="0.5" fill="#fff" opacity="0.40"/><circle cx="127" cy="77" r="0.6" fill="#fff" opacity="0.33"/><circle cx="385" cy="137" r="0.5" fill="#fff" opacity="0.16"/><circle cx="56" cy="44" r="0.8" fill="#fff" opacity="0.27"/><circle cx="132" cy="83" r="0.6" fill="#fff" opacity="0.27"/><circle cx="304" cy="127" r="0.5" fill="#fff" opacity="0.16"/><circle cx="113" cy="71" r="0.5" fill="#fff" opacity="0.46"/><circle cx="243" cy="2" r="0.6" fill="#fff" opacity="0.36"/><circle cx="307" cy="149" r="0.8" fill="#fff" opacity="0.32"/><circle cx="407" cy="60" r="0.6" fill="#fff" opacity="0.39"/><circle cx="321" cy="140" r="0.6" fill="#fff" opacity="0.44"/><circle cx="29" cy="130" r="0.8" fill="#fff" opacity="0.42"/><circle cx="260" cy="101" r="0.6" fill="#fff" opacity="0.47"/><circle cx="64" cy="75" r="0.8" fill="#fff" opacity="0.46"/><circle cx="434" cy="84" r="0.6" fill="#fff" opacity="0.36"/><circle cx="362" cy="11" r="0.5" fill="#fff" opacity="0.24"/><circle cx="38" cy="10" r="0.5" fill="#fff" opacity="0.27"/><circle cx="191" cy="11" r="0.6" fill="#fff" opacity="0.40"/><circle cx="22" cy="131" r="0.5" fill="#fff" opacity="0.37"/><circle cx="368" cy="17" r="0.5" fill="#fff" opacity="0.50"/><circle cx="315" cy="68" r="0.5" fill="#fff" opacity="0.36"/><circle cx="185" cy="25" r="0.8" fill="#fff" opacity="0.22"/><circle cx="248" cy="103" r="0.8" fill="#fff" opacity="0.18"/><circle cx="26" cy="90" r="0.8" fill="#fff" opacity="0.29"/><circle cx="278" cy="2" r="0.5" fill="#fff" opacity="0.26"/><circle cx="268" cy="76" r="0.8" fill="#fff" opacity="0.28"/><circle cx="25" cy="109" r="0.5" fill="#fff" opacity="0.35"/><circle cx="302" cy="45" r="0.8" fill="#fff" opacity="0.34"/><circle cx="98" cy="10" r="0.5" fill="#fff" opacity="0.24"/><circle cx="335" cy="81" r="0.5" fill="#fff" opacity="0.43"/><circle cx="385" cy="71" r="0.6" fill="#fff" opacity="0.21"/><circle cx="318" cy="102" r="0.5" fill="#fff" opacity="0.35"/><circle cx="16" cy="135" r="0.8" fill="#fff" opacity="0.36"/><circle cx="106" cy="137" r="0.6" fill="#fff" opacity="0.49"/><circle cx="48" cy="83" r="0.8" fill="#fff" opacity="0.40"/><circle cx="24" cy="24" r="0.6" fill="#fff" opacity="0.39"/><circle cx="99" cy="18" r="0.8" fill="#fff" opacity="0.32"/><circle cx="94" cy="109" r="0.6" fill="#fff" opacity="0.27"/><circle cx="105" cy="52" r="0.8" fill="#fff" opacity="0.40"/><circle cx="355" cy="59" r="0.8" fill="#fff" opacity="0.44"/><circle cx="289" cy="126" r="0.6" fill="#fff" opacity="0.49"/><circle cx="162" cy="6" r="0.8" fill="#fff" opacity="0.23"/><circle cx="81" cy="10" r="0.5" fill="#fff" opacity="0.16"/><circle cx="90" cy="6" r="0.6" fill="#fff" opacity="0.38"/><circle cx="155" cy="67" r="0.6" fill="#fff" opacity="0.46"/><circle cx="276" cy="67" r="0.6" fill="#fff" opacity="0.31"/><circle cx="85" cy="102" r="0.5" fill="#fff" opacity="0.28"/><circle cx="172" cy="137" r="0.5" fill="#fff" opacity="0.34"/><circle cx="49" cy="128" r="0.6" fill="#fff" opacity="0.39"/><circle cx="15" cy="140" r="0.6" fill="#fff" opacity="0.47"/><circle cx="165" cy="146" r="0.8" fill="#fff" opacity="0.16"/><circle cx="204" cy="132" r="0.5" fill="#fff" opacity="0.19"/><circle cx="298" cy="45" r="0.8" fill="#fff" opacity="0.23"/><circle cx="443" cy="5" r="0.8" fill="#fff" opacity="0.16"/><circle cx="103" cy="12" r="0.6" fill="#fff" opacity="0.47"/><circle cx="315" cy="106" r="0.5" fill="#fff" opacity="0.31"/><circle cx="126" cy="114" r="0.8" fill="#fff" opacity="0.31"/><circle cx="346" cy="27" r="0.5" fill="#fff" opacity="0.48"/><circle cx="288" cy="67" r="0.6" fill="#fff" opacity="0.15"/><circle cx="27" cy="122" r="0.6" fill="#fff" opacity="0.21"/><circle cx="15" cy="130" r="0.8" fill="#fff" opacity="0.35"/><circle cx="419" cy="112" r="0.5" fill="#fff" opacity="0.46"/><circle cx="219" cy="146" r="0.5" fill="#fff" opacity="0.39"/><circle cx="287" cy="78" r="0.5" fill="#fff" opacity="0.17"/><circle cx="372" cy="70" r="0.8" fill="#fff" opacity="0.17"/><circle cx="17" cy="152" r="0.5" fill="#fff" opacity="0.39"/><circle cx="286" cy="29" r="0.5" fill="#fff" opacity="0.18"/><circle cx="140" cy="17" r="0.8" fill="#fff" opacity="0.49"/><circle cx="72" cy="12" r="0.8" fill="#fff" opacity="0.23"/><circle cx="8" cy="84" r="0.6" fill="#fff" opacity="0.30"/><circle cx="343" cy="81" r="0.5" fill="#fff" opacity="0.40"/><circle cx="407" cy="48" r="0.6" fill="#fff" opacity="0.46"/><circle cx="446" cy="86" r="0.5" fill="#fff" opacity="0.26"/><circle cx="39" cy="120" r="0.6" fill="#fff" opacity="0.26"/><circle cx="58" cy="13" r="0.5" fill="#fff" opacity="0.39"/><circle cx="356" cy="151" r="0.8" fill="#fff" opacity="0.24"/><circle cx="27" cy="109" r="0.5" fill="#fff" opacity="0.40"/><circle cx="355" cy="138" r="0.5" fill="#fff" opacity="0.18"/><circle cx="343" cy="59" r="0.8" fill="#fff" opacity="0.15"/><circle cx="128" cy="147" r="0.5" fill="#fff" opacity="0.35"/><circle cx="197" cy="127" r="0.8" fill="#fff" opacity="0.42"/><circle cx="8" cy="7" r="0.6" fill="#fff" opacity="0.24"/><circle cx="362" cy="60" r="0.5" fill="#fff" opacity="0.26"/><circle cx="137" cy="21" r="0.6" fill="#fff" opacity="0.39"/><circle cx="127" cy="10" r="0.8" fill="#fff" opacity="0.35"/><circle cx="12" cy="8" r="0.5" fill="#fff" opacity="0.44"/><circle cx="194" cy="40" r="0.8" fill="#fff" opacity="0.16"/><circle cx="235" cy="20" r="0.5" fill="#fff" opacity="0.27"/><circle cx="6" cy="91" r="0.5" fill="#fff" opacity="0.40"/><circle cx="43" cy="83" r="0.5" fill="#fff" opacity="0.37"/><circle cx="64" cy="119" r="0.6" fill="#fff" opacity="0.43"/><circle cx="53" cy="49" r="0.5" fill="#fff" opacity="0.31"/><circle cx="194" cy="69" r="0.8" fill="#fff" opacity="0.48"/><circle cx="238" cy="151" r="0.8" fill="#fff" opacity="0.15"/><circle cx="57" cy="133" r="0.8" fill="#fff" opacity="0.17"/><circle cx="436" cy="5" r="0.8" fill="#fff" opacity="0.23"/><circle cx="314" cy="55" r="0.6" fill="#fff" opacity="0.23"/><circle cx="124" cy="31" r="0.8" fill="#fff" opacity="0.33"/><circle cx="341" cy="122" r="0.6" fill="#fff" opacity="0.27"/><circle cx="111" cy="153" r="0.5" fill="#fff" opacity="0.37"/><circle cx="179" cy="22" r="0.5" fill="#fff" opacity="0.32"/><circle cx="17" cy="26" r="0.5" fill="#fff" opacity="0.41"/><circle cx="126" cy="144" r="0.6" fill="#fff" opacity="0.32"/>
<g filter="url(#tb)"><ellipse cx="306" cy="110" rx="11" ry="7" fill="#d8d8d8" transform="rotate(-15 306 110)"/><ellipse cx="322" cy="106" rx="10" ry="7" fill="#f2f2f2"/><ellipse cx="332" cy="104" rx="5" ry="5.5" fill="#e0e0e0"/></g>
<path d="M300 98 L312 104 M318 92 L322 100 M338 96 L330 102 M312 124 L316 114 M325 126 L324 114" stroke="#bbb" stroke-width=".7"/>
<rect x="245.500" y="52.500" width="140" height="110" fill="none" stroke="#fff" stroke-width="1.4"/></svg>
<div class="t b" style="top:389.80px;font-size:13px;line-height:16px;left:1490px;">Zoom</div>
<div class="combo" style="left:1561px;top:388px;width:78px;height:20px;background:#fdfdfd;border-color:#c4c8cc"></div>
<div class="t " style="top:389.80px;font-size:13px;line-height:16px;left:1566px;">100</div>
<svg style="left:1623px;top:395px" width="9" height="6" viewBox="0 0 9 6" ><path d="M1 1 L4.5 5 L8 1" fill="none" stroke="#8a8e92" stroke-width="1.6" stroke-linecap="round" stroke-linejoin="round"/></svg>
<div class="t b" style="top:389.80px;font-size:13px;line-height:16px;left:1640px;">%</div>
<div style="left:1904px;top:386px;width:23px;height:21px;background:#f1f2f3"></div><div style="left:1930px;top:386px;width:23px;height:21px;background:#f1f2f3"></div>
<div style="left:1908px;top:395px;width:14px;height:3.4px;background:#2d3239"></div>
<div style="left:1934px;top:395px;width:14px;height:3.4px;background:#2d3239"></div><div style="left:1939.3px;top:389.7px;width:3.4px;height:14px;background:#2d3239"></div>
<div class="t b" style="top:416.60px;font-size:13px;line-height:16px;left:1490px;">Rotation</div>
<div class="combo" style="left:1561px;top:414px;width:78px;height:21px;background:#fdfdfd;border-color:#c4c8cc"></div>
<div class="t " style="top:416.60px;font-size:13px;line-height:16px;left:1566px;">0</div>
<svg style="left:1623px;top:422px" width="9" height="6" viewBox="0 0 9 6" ><path d="M1 1 L4.5 5 L8 1" fill="none" stroke="#8a8e92" stroke-width="1.6" stroke-linecap="round" stroke-linejoin="round"/></svg>
<div class="t b" style="top:414.20px;font-size:13px;line-height:16px;left:1640px;">°</div>
<div style="left:1904px;top:413px;width:23px;height:21px;background:#f1f2f3"></div><div style="left:1930px;top:413px;width:23px;height:21px;background:#f1f2f3"></div>
<svg style="left:1903px;top:412px" width="22" height="22" viewBox="0 0 22 22" ><path d="M5.6 8 A7 7 0 1 1 4.2 13.4" fill="none" stroke="#2d3239" stroke-width="3.4"/><path d="M0.6 1.6 L10.8 3.4 L3.6 11.4Z" fill="#2d3239"/></svg>
<svg style="left:1930px;top:412px" width="22" height="22" viewBox="0 0 22 22" ><g transform="translate(22,0) scale(-1,1)"><path d="M5.6 8 A7 7 0 1 1 4.2 13.4" fill="none" stroke="#2d3239" stroke-width="3.4"/><path d="M0.6 1.6 L10.8 3.4 L3.6 11.4Z" fill="#2d3239"/></g></svg>
<div style="left:1484px;top:437px;width:474px;height:1px;background:#c3c7cb"></div>
<div class="ph" style="left:1486px;top:440px;width:471px"></div><svg style="left:1496px;top:447px" width="12" height="7" viewBox="0 0 12 7" ><path d="M0 0 H12 L6 7Z" fill="#2d3239"/></svg><div class="t b" style="top:443.40px;font-size:13px;line-height:16px;left:1421px;width:600px;text-align:center;color:#5e6972">Histogram and colormap</div>
<div class="cb off" style="left:1491px;top:465px;opacity:.6"></div><svg style="left:1491px;top:462px" width="17" height="18" viewBox="0 0 17 18" ><path d="M3.4 9.6 L6.9 14 L13.6 2.4" fill="none" stroke="#9aa0a6" stroke-width="2.5"/></svg>
<div class="t g" style="top:464.80px;font-size:13px;line-height:16px;left:1511px;">Refresh</div>
<div class="cb" style="left:1568px;top:465px"></div><svg style="left:1568px;top:462px" width="17" height="18" viewBox="0 0 17 18" ><path d="M3.4 9.6 L6.9 14 L13.6 2.4" fill="none" stroke="#3a4653" stroke-width="2.5"/></svg>
<div class="t " style="top:464.80px;font-size:13px;line-height:16px;left:1588px;">Auto bounds</div>
<div style="left:1857px;top:466px;width:13px;height:13px;border-radius:50%;border:1px solid #8fafc8;background:#d3e6f3"></div><div style="left:1861px;top:470px;width:5px;height:5px;border-radius:50%;background:#2d3239"></div>
<div class="t " style="top:464.80px;font-size:13px;line-height:16px;left:1875px;">log</div>
<div style="left:1901px;top:466px;width:13px;height:13px;border-radius:50%;border:1px solid #9ea2a6;background:linear-gradient(#fdfdfd,#e4e5e6)"></div>
<div class="t " style="top:464.80px;font-size:13px;line-height:16px;left:1918px;">linear</div>
<div style="left:1486px;top:484px;width:471px;height:1px;background:#d3d6d9"></div>
<svg style="left:0px;top:0px" width="1984" height="600" viewBox="0 0 1984 600" ><path d="M1493 585 L1493 490 L1496 490 L1497 493 L1498 520 L1500 540 L1502 536 L1504 542 L1507 545 L1509 550 L1512 552 L1514 548 L1517 540 L1520 537 L1523 538 L1526 540 L1529 544 L1533 548 L1536 558 L1538 562 L1540 568 L1542 572 L1544 585 L1544 585Z" fill="#2e3440"/><path d="M1491.5 490 V585" stroke="#2d3cf0" stroke-width="1.6"/><path d="M1514 499 V585" stroke="#7ff07f" stroke-width="1.5"/><path d="M1536.5 490 V585" stroke="#f0302a" stroke-width="1.6"/><path d="M1949.5 542 V585" stroke="#2e3440" stroke-width="1"/></svg>
<div style="left:1490px;top:592px;width:463px;height:97px;border:1px solid #111;background:linear-gradient(90deg,#000 0,#7a7a7a 46%,#9c9c9c 56%,#d8d8d8 78%,#fff 97%)"></div>
<svg style="left:1491px;top:593px" width="461" height="95" viewBox="0 0 461 95" ><defs><linearGradient id="wl" x1="0" x2="1"><stop offset="0" stop-color="#fff" stop-opacity=".0"/><stop offset=".05" stop-color="#fff" stop-opacity=".9"/><stop offset="1" stop-color="#fff"/></linearGradient></defs>
<rect x="9" y="2.2" width="452" height="3.6" fill="#fff"/><rect x="0" y="14.5" width="461" height="1.2" fill="#fff" opacity=".72"/><rect x="0" y="30.5" width="461" height="1.2" fill="#fff" opacity=".72"/><rect x="0" y="46.5" width="461" height="1.2" fill="#fff" opacity=".72"/><rect x="0" y="62.5" width="461" height="1.2" fill="#fff" opacity=".72"/><rect x="0" y="78.5" width="461" height="1.2" fill="#fff" opacity=".72"/>
<path d="M8 90.5 L453 5" stroke="#3a3a3a" stroke-width="3.8"/><path d="M8 90.5 L453 5" stroke="#8c8c8c" stroke-width="2.4"/>
<rect x="0" y="0" width="7" height="7" fill="#fff" stroke="#222" stroke-width=".8"/><rect x="0" y="88" width="7" height="7" fill="#8a8a8a" stroke="#444" stroke-width=".8"/><rect x="452" y="0.5" width="8" height="8" fill="#8a8a8a" stroke="#333" stroke-width=".8"/></svg>
<div class="btn" style="left:1490px;top:692px;width:26px;height:25px"></div><div class="btn sel" style="left:1516px;top:692px;width:26px;height:25px"></div><div class="btn" style="left:1542px;top:692px;width:26px;height:25px"></div>
<div style="left:1494px;top:695px;width:18px;height:18px;border-radius:50%;background:radial-gradient(circle,#fff 0,rgba(255,255,255,.7) 25%,rgba(255,255,255,0) 60%),conic-gradient(#f33,#fd3,#3d3,#3dd,#33f,#d3d,#f33)"></div>
<div style="left:1520px;top:695px;width:18px;height:18px;border-radius:50%;background:radial-gradient(circle at 45% 35%,#f2f2f2,#8a8a8a 60%,#555)"></div>
<div style="left:1546px;top:695px;width:18px;height:18px;background:repeating-conic-gradient(#8a8a8a 0 25%,#c8c8c8 0 50%) 0 0/5px 5px"></div>
<div class="combo" style="left:1807px;top:692px;width:96px;height:25px;border-color:#c4c8cc;background:#fbfbfb"></div>
<div style="left:1813px;top:695px;width:62px;height:19px;background:linear-gradient(90deg,rgba(255,255,255,0),#fbfbfb 85%),repeating-linear-gradient(#111 0,#111 2px,#fbfbfb 2px,#fbfbfb 3px)"></div>
<svg style="left:1887px;top:702px" width="9" height="6" viewBox="0 0 9 6" ><path d="M1 1 L4.5 5 L8 1" fill="none" stroke="#8a8e92" stroke-width="1.6" stroke-linecap="round" stroke-linejoin="round"/></svg>
<svg style="left:1906px;top:694px" width="22" height="20" viewBox="0 0 22 20" ><path d="M1 17 V3.5 Q1 2 2.5 2 H7 L9 4.5 H17 V7.5 H5.5 L1 17Z" fill="#2d3239"/><path d="M2.5 18 L6.5 9 H21 L17 18Z" fill="#2d3239"/></svg>
<svg style="left:1931px;top:694px" width="20" height="20" viewBox="0 0 20 20" ><path d="M1.5 1.5 H15.5 L18.5 4.5 V18.5 H1.5Z" fill="none" stroke="#2d3239" stroke-width="2"/><rect x="5" y="1.5" width="9" height="6" fill="#2d3239"/><rect x="10.5" y="2.6" width="2" height="3.6" fill="#fcfdfd"/></svg>
<div style="left:1486px;top:721px;width:471px;height:1px;background:#c9cdd1"></div>
<div style="left:1488px;top:722px;width:63px;height:23px;border:1px solid #b9c3cc;border-top:none;border-radius:0 0 3px 3px;background:linear-gradient(#fcfdfd 60%,#dde8f0)"></div>
<div class="cb" style="left:1497px;top:725px;border-color:#98a6b3;background:linear-gradient(#cbd5de,#bcc8d3)"></div>
<svg style="left:1497px;top:722px" width="17" height="18" viewBox="0 0 17 18" ><path d="M3.4 9.6 L6.9 14 L13.6 2.4" fill="none" stroke="#4a5560" stroke-width="2.7"/></svg>
<div class="t " style="top:725.80px;font-size:13px;line-height:16px;left:1517px;">ch 0</div>
<div style="left:1484px;top:749px;width:474px;height:1px;background:#c3c7cb"></div>
<div class="ph" style="left:1486px;top:752px;width:471px"></div><svg style="left:1496px;top:759px" width="12" height="7" viewBox="0 0 12 7" ><path d="M0 0 H12 L6 7Z" fill="#2d3239"/></svg><div class="t b" style="top:755.40px;font-size:13px;line-height:16px;left:1421px;width:600px;text-align:center;color:#5e6972">Sequence Properties</div>
<div class="t " style="top:773.60px;font-size:13px;line-height:16px;left:1486px;">Name</div>
<div class="t " style="top:773.60px;font-size:13px;line-height:16px;left:1573px;">Substack-StraightWalk-1.avi</div>
<div class="t " style="top:794.60px;font-size:13px;line-height:16px;left:1486px;">Dimension</div>
<div class="t " style="top:794.60px;font-size:13px;line-height:16px;left:1573px;">2560 x 918 x 1 x 136</div>
<div class="t " style="top:815.60px;font-size:13px;line-height:16px;left:1486px;">Channel</div>
<div class="t " style="top:815.60px;font-size:13px;line-height:16px;left:1573px;">1 - unsigned byte (8 bits)</div>
<div class="t " style="top:836.60px;font-size:13px;line-height:16px;left:1486px;">Size</div>
<div class="t " style="top:836.60px;font-size:13px;line-height:16px;left:1573px;">304.8 MB</div>
<div class="t " style="top:857.60px;font-size:13px;line-height:16px;left:1486px;">Pixel size</div>
<div class="t " style="top:857.60px;font-size:13px;line-height:16px;left:1573px;">1.0µm</div>
<div class="t " style="top:878.60px;font-size:13px;line-height:16px;left:1486px;">Time interval</div>
<div class="t " style="top:878.60px;font-size:13px;line-height:16px;left:1573px;">100.0ms</div>
<div class="t " style="top:857.60px;font-size:13px;line-height:16px;left:1697.5px;">1.0µm</div>
<div class="t " style="top:857.60px;font-size:13px;line-height:16px;left:1830px;">1.0µm</div>
<div class="btn" style="left:1486px;top:899.5px;width:206px;height:25.5px"></div><div class="btn" style="left:1697px;top:899.5px;width:260px;height:25.5px"></div>
<svg style="left:1564px;top:900px" width="22" height="22" viewBox="0 0 22 22" ><rect x="1.5" y="4" width="16" height="16.5" rx="3" fill="#2d3239"/><path d="M6 16 L17.5 4.5" stroke="#fcfdfd" stroke-width="6.2"/><path d="M5.6 16.6 L6.6 12.2 L16 2.8 L19.4 6.2 L10 15.6Z" fill="#2d3239"/><path d="M5 17.2 L6 14 L8.2 16.2Z" fill="#fcfdfd"/></svg>
<div class="t " style="top:903.90px;font-size:13px;line-height:16px;left:1589px;">Edit</div>
<svg style="left:1787px;top:901px" width="16" height="21" viewBox="0 0 16 21" ><path d="M1 1 H10 L15 6 V20 H1Z" fill="#2d3239"/><path d="M10 1 V6 H15" fill="none" stroke="#fcfdfd" stroke-width="1"/><path d="M3.5 9.5 H12.5 M3.5 12.5 H12.5 M3.5 15.5 H12.5" stroke="#fcfdfd" stroke-width="1.2"/></svg>
<div class="t " style="top:903.90px;font-size:13px;line-height:16px;left:1810px;">Metadata</div>
<div style="left:1484px;top:926px;width:474px;height:1px;background:#bfc3c7"></div>
<div style="left:1479px;top:1089px;width:485px;height:55px;background:#000"></div>
<div style="left:1482px;top:1092px;width:480px;height:52px;border-radius:9px 9px 0 0;background:linear-gradient(#8d8d8d 0,#5a5a5a 12px,#1c1c1c 26px,#000 32px)"></div>
<div class="t" style="left:1421px;width:600px;text-align:center;top:1092.5px;font-family:'Liberation Sans',sans-serif;font-weight:bold;font-size:9.5px;letter-spacing:-0.1px;color:#8ef58e;text-shadow:1px 1px 0 #123,0 0 2px #000">Memory: 656.6 MB&nbsp; (Max: 19.5 GB)</div>
<div class="t" style="left:1421px;width:600px;text-align:center;top:1104.5px;font-family:'Liberation Sans',sans-serif;font-weight:bold;font-size:9.5px;letter-spacing:-0.1px;color:#dcdcff;text-shadow:1px 1px 0 #123,0 0 2px #000">CPU: 0%</div>
<svg style="left:1479px;top:1118px" width="485" height="26" viewBox="0 0 485 26" ><polyline points="5,14.3 122,14.3 127,18.2 151,18.2 156,7.3 186,7.3 190,15.6 214,15.6 218,22 457,22" fill="none" stroke="#8a88e8" stroke-width="1.3"/><path d="M5 20.3 H160 L164 22 H457" fill="none" stroke="#16f030" stroke-width="2.6"/></svg>
<div style="left:904px;top:596px;width:549px;height:357.5px;border:5px solid #f4150c;border-radius:11px;box-shadow:0 0 0 2px #fff,inset 0 0 0 1.5px #fff"></div>
<div style="left:1080.5px;top:566px;width:156px;height:32.5px;border:5px solid #f4150c;border-radius:12px;box-shadow:0 0 0 2px #fff,inset 0 0 0 1px #fff"></div>
<div class="t" style="left:1096.5px;top:529.8px;height:36px;line-height:36px;font-family:'Liberation Sans',sans-serif;font-weight:bold;font-size:29.5px;letter-spacing:0.37px;color:#f4150c;-webkit-text-stroke:.5px #f4150c">Recommended</div>
<div class="t" style="left:932.5px;top:963.7px;height:36px;line-height:36px;font-family:'Liberation Sans',sans-serif;font-weight:bold;font-size:29.5px;letter-spacing:0.37px;color:#f4150c;-webkit-text-stroke:.5px #f4150c;text-shadow:0 0 2px #fff,0 0 2px #fff,0 0 3px #fff,1px 1px 1px #fff,-1px -1px 1px #fff,1px -1px 1px #fff,-1px 1px 1px #fff">Fly legs parameters</div>
</body></html>
